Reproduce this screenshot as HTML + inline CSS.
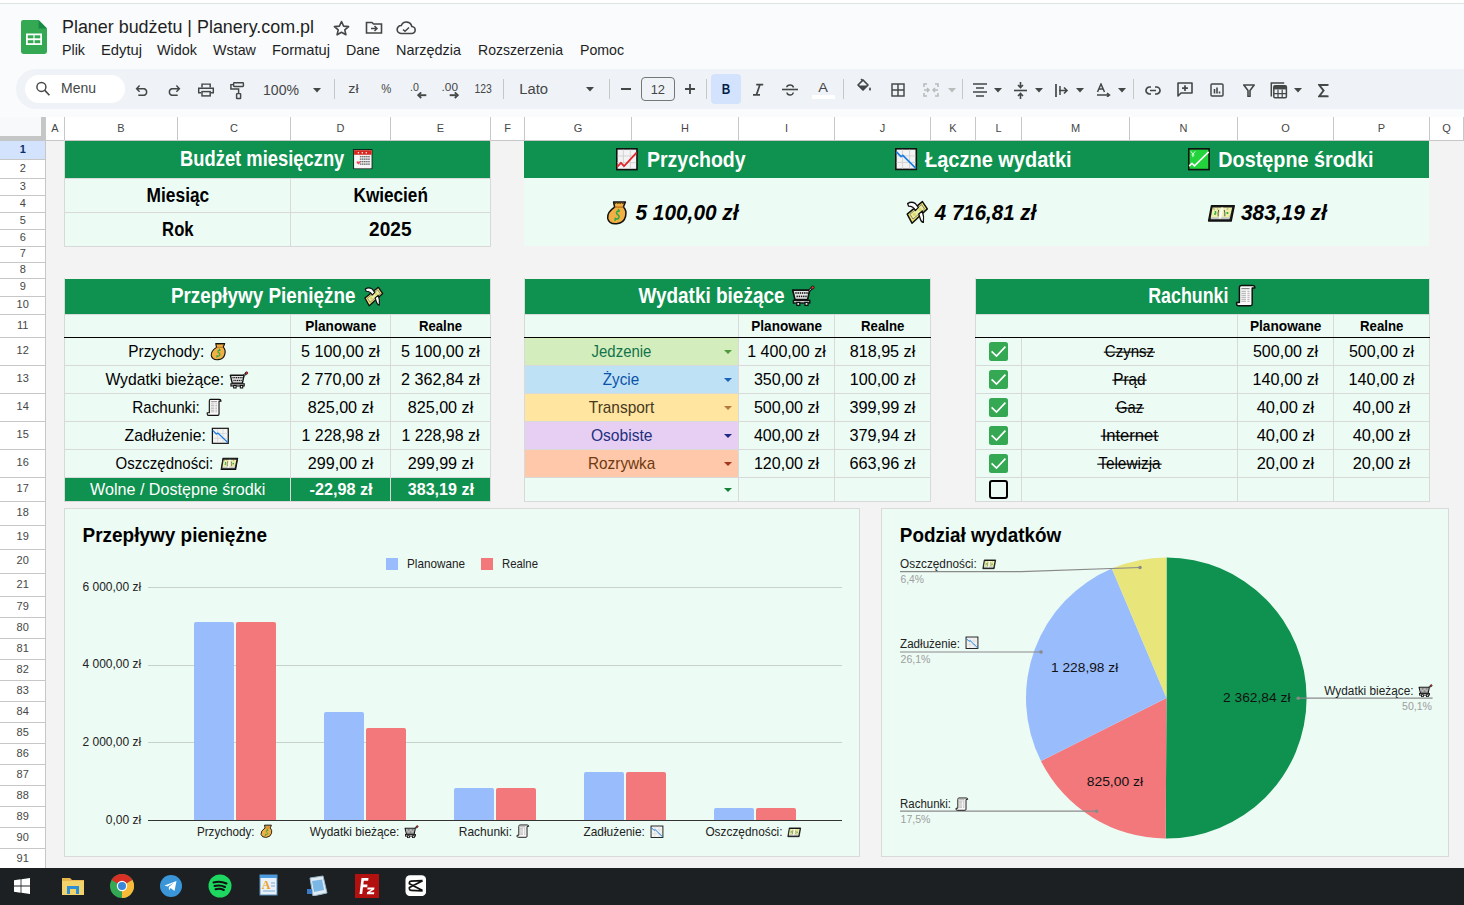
<!DOCTYPE html><html><head><meta charset="utf-8"><style>
html,body{margin:0;padding:0;width:1464px;height:905px;overflow:hidden;background:#f9fbfd;font-family:"Liberation Sans",sans-serif;}
</style></head><body>
<div style="position:absolute;left:0px;top:0px;width:1464px;height:3px;background:#ffffff;"></div>
<div style="position:absolute;left:0px;top:3px;width:1464px;height:1px;background:#dfe4e0;"></div>
<svg style="position:absolute;left:21px;top:20px" width="26" height="34" viewBox="0 0 26 34"><path d="M2.2 0H17.6L26 8.6V31.6Q26 34 23.6 34H2.4Q0 34 0 31.6V2.2Q0 0 2.2 0Z" fill="#34a853"/><path d="M17.6 0L26 8.6H17.6Z" fill="#178a43"/><rect x="5" y="13.5" width="16" height="11.5" fill="#fff"/><rect x="6.8" y="15.3" width="5.6" height="3" fill="#34a853"/><rect x="13.6" y="15.3" width="5.6" height="3" fill="#34a853"/><rect x="6.8" y="20.2" width="5.6" height="3" fill="#34a853"/><rect x="13.6" y="20.2" width="5.6" height="3" fill="#34a853"/></svg>

<svg style="position:absolute;left:333px;top:20px" width="17" height="16" viewBox="0 0 17 16"><path d="M8.5 1.5L10.6 6.1L15.6 6.6L11.8 9.9L12.9 14.8L8.5 12.3L4.1 14.8L5.2 9.9L1.4 6.6L6.4 6.1Z" fill="none" stroke="#444746" stroke-width="1.6" stroke-linejoin="round"/></svg>
<svg style="position:absolute;left:365px;top:20px" width="18" height="15" viewBox="0 0 18 15"><path d="M1.5 2.5H7L8.5 4H16.5V13H1.5Z" fill="none" stroke="#444746" stroke-width="1.6"/><path d="M6 8.5H12M9.5 6L12 8.5L9.5 11" fill="none" stroke="#444746" stroke-width="1.5"/></svg>
<svg style="position:absolute;left:396px;top:20px" width="20" height="15" viewBox="0 0 20 15"><path d="M5 13.5H15.5A3.5 3.5 0 0 0 15.8 6.5A5.5 5.5 0 0 0 5.3 5.5A4 4 0 0 0 5 13.5Z" fill="none" stroke="#444746" stroke-width="1.6"/><path d="M7 9.5L9 11.3L13 7.5" fill="none" stroke="#444746" stroke-width="1.5"/></svg>









<div style="position:absolute;left:16px;top:69px;width:1484px;height:40px;background:#eff2f7;border-radius:20px"></div>
<div style="position:absolute;left:25px;top:75px;width:100px;height:28px;background:#ffffff;border-radius:14px"></div>
<svg style="position:absolute;left:34px;top:81px" width="17" height="17" viewBox="0 0 17 17"><circle cx="7.4" cy="5.9" r="4.5" fill="none" stroke="#444746" stroke-width="1.45"/><path d="M10.6 9.1L15.4 14.2" stroke="#444746" stroke-width="1.6"/></svg>

<svg style="position:absolute;left:0;top:0" width="260" height="110">
<path d="M139.6 85.6L136.6 88.7L139.6 91.8M137 88.7H144.2A3.45 3.45 0 0 1 144.2 95.3H138.3" fill="none" stroke="#444746" stroke-width="1.45"/>
<path d="M176.4 85.6L179.4 88.7L176.4 91.8M179 88.7H171.8A3.45 3.45 0 0 0 171.8 95.3H177.7" fill="none" stroke="#444746" stroke-width="1.45"/>
<path d="M202 87.6V84.1H210.2V87.6" fill="none" stroke="#444746" stroke-width="1.45"/><path d="M201.2 92.8H198.7V88.2H213.3V92.8H210.8" fill="none" stroke="#444746" stroke-width="1.45"/><rect x="202" y="91.6" width="8.2" height="4.3" fill="none" stroke="#444746" stroke-width="1.45"/>
<rect x="233.6" y="82.8" width="9.8" height="3.6" rx="0.6" fill="none" stroke="#444746" stroke-width="1.45"/><path d="M233.6 84.6H230.9V88.9H238.6V93.4" fill="none" stroke="#444746" stroke-width="1.45"/><rect x="236.6" y="93.6" width="4" height="4.9" rx="0.5" fill="none" stroke="#444746" stroke-width="1.45"/>
</svg>

<svg style="position:absolute;left:313px;top:88px" width="8" height="5" viewBox="0 0 8 5"><path d="M0 0H8L4 4.5Z" fill="#444746"/></svg>
<div style="position:absolute;left:334px;top:79px;width:1px;height:20px;background:#c7c7c7;"></div>



<svg style="position:absolute;left:417px;top:92px" width="10" height="7" viewBox="0 0 10 7"><path d="M9.3 3.2H2.5" stroke="#444746" stroke-width="1.9"/><path d="M4.2 0.4L1.2 3.2L4.2 6" fill="none" stroke="#444746" stroke-width="1.8"/></svg>

<svg style="position:absolute;left:449px;top:92px" width="10" height="7" viewBox="0 0 10 7"><path d="M0.7 3.2H7.5" stroke="#444746" stroke-width="1.9"/><path d="M5.8 0.4L8.8 3.2L5.8 6" fill="none" stroke="#444746" stroke-width="1.8"/></svg>

<div style="position:absolute;left:503px;top:79px;width:1px;height:20px;background:#c7c7c7;"></div>

<svg style="position:absolute;left:586px;top:87px" width="8" height="5" viewBox="0 0 8 5"><path d="M0 0H8L4 4.5Z" fill="#444746"/></svg>
<div style="position:absolute;left:609px;top:79px;width:1px;height:20px;background:#c7c7c7;"></div>
<div style="position:absolute;left:621px;top:88px;width:10px;height:2px;background:#444746;"></div>
<div style="position:absolute;left:641px;top:77px;width:34px;height:24px;background:transparent;box-sizing:border-box;border:1px solid #747775;border-radius:4px"></div>

<svg style="position:absolute;left:685px;top:84px" width="10" height="10" viewBox="0 0 10 10"><path d="M5 0V10M0 5H10" stroke="#444746" stroke-width="1.8"/></svg>
<div style="position:absolute;left:706px;top:79px;width:1px;height:20px;background:#c7c7c7;"></div>
<div style="position:absolute;left:711px;top:74px;width:30px;height:30px;background:#d3e3fd;border-radius:4px"></div>

<svg style="position:absolute;left:750px;top:82px" width="16" height="16" viewBox="0 0 16 16"><path d="M6.2 2.7H13.2M3 12.9H10M9.9 2.7L6.4 12.9" stroke="#444746" stroke-width="1.7"/></svg>
<svg style="position:absolute;left:781px;top:84px" width="18" height="12" viewBox="0 0 18 12"><path d="M1 5.5H17" stroke="#444746" stroke-width="1.6"/><path d="M12.5 3.5Q12 1 9 1Q6 1 5.8 3.2" fill="none" stroke="#444746" stroke-width="1.45"/><path d="M6 8.5Q6.2 11 9 11Q12 11 12.3 8.5" fill="none" stroke="#444746" stroke-width="1.45"/></svg>

<div style="position:absolute;left:812px;top:95px;width:23px;height:4px;background:#ffffff;"></div>
<div style="position:absolute;left:843px;top:79px;width:1px;height:20px;background:#c7c7c7;"></div>
<svg style="position:absolute;left:856px;top:78px" width="16" height="14" viewBox="0 0 16 14"><path d="M2 7L7 2L12 7L7 12Z" fill="none" stroke="#444746" stroke-width="1.7" stroke-linejoin="round"/><path d="M2.5 7.5H11.5L7 12Z" fill="#444746"/><path d="M5 1L7 3" stroke="#444746" stroke-width="1.6"/><path d="M14 9Q15.5 11 14.8 12.2Q14 13 13.2 12.2Q12.5 11 14 9Z" fill="#444746"/></svg>
<svg style="position:absolute;left:891px;top:83px" width="14" height="14" viewBox="0 0 14 14"><rect x="1" y="1" width="12" height="12" fill="none" stroke="#444746" stroke-width="1.45"/><path d="M7 1V13M1 7H13" fill="none" stroke="#444746" stroke-width="1.45"/></svg>
<svg style="position:absolute;left:923px;top:83px" width="16" height="14" viewBox="0 0 16 14"><path d="M1 4V1H4M12 1H15V4M1 10V13H4M12 13H15V10" fill="none" stroke="#b9bcbb" stroke-width="1.6"/><path d="M1 7H6M4 5L6 7L4 9M15 7H10M12 5L10 7L12 9" fill="none" stroke="#b9bcbb" stroke-width="1.5"/></svg>
<svg style="position:absolute;left:948px;top:88px" width="8" height="5" viewBox="0 0 8 5"><path d="M0 0H8L4 4.5Z" fill="#b9bcbb"/></svg>
<div style="position:absolute;left:962px;top:79px;width:1px;height:20px;background:#c7c7c7;"></div>
<svg style="position:absolute;left:973px;top:83px" width="14" height="14" viewBox="0 0 14 14"><path d="M0 1H14M3 5H11M0 9H14M3 13H11" stroke="#444746" stroke-width="1.7"/></svg>
<svg style="position:absolute;left:994px;top:88px" width="8" height="5" viewBox="0 0 8 5"><path d="M0 0H8L4 4.5Z" fill="#444746"/></svg>
<svg style="position:absolute;left:1014px;top:82px" width="13" height="17" viewBox="0 0 13 17"><path d="M0 8.5H13" stroke="#444746" stroke-width="1.6"/><path d="M6.5 0V5M4 3L6.5 5.5L9 3M6.5 17V12M4 14L6.5 11.5L9 14" fill="none" stroke="#444746" stroke-width="1.6"/></svg>
<svg style="position:absolute;left:1035px;top:88px" width="8" height="5" viewBox="0 0 8 5"><path d="M0 0H8L4 4.5Z" fill="#444746"/></svg>
<svg style="position:absolute;left:1055px;top:84px" width="14" height="13" viewBox="0 0 14 13"><path d="M1 0V13" stroke="#444746" stroke-width="1.7"/><path d="M4 6.5H12M9 3.5L12 6.5L9 9.5" fill="none" stroke="#444746" stroke-width="1.6"/><path d="M5 2V11" stroke="#444746" stroke-width="1.5"/></svg>
<svg style="position:absolute;left:1076px;top:88px" width="8" height="5" viewBox="0 0 8 5"><path d="M0 0H8L4 4.5Z" fill="#444746"/></svg>
<svg style="position:absolute;left:1096px;top:83px" width="15" height="14" viewBox="0 0 15 14"><path d="M1.5 9L5 1L8.5 9M2.8 6H7.2" fill="none" stroke="#444746" stroke-width="1.5"/><path d="M1 12H13M11 10L13.5 12L11 14" fill="none" stroke="#444746" stroke-width="1.5"/></svg>
<svg style="position:absolute;left:1118px;top:88px" width="8" height="5" viewBox="0 0 8 5"><path d="M0 0H8L4 4.5Z" fill="#444746"/></svg>
<div style="position:absolute;left:1133px;top:79px;width:1px;height:20px;background:#c7c7c7;"></div>
<svg style="position:absolute;left:1145px;top:86px" width="16" height="9" viewBox="0 0 16 9"><path d="M6 1H4.5A3.5 3.5 0 0 0 4.5 8H6M10 1H11.5A3.5 3.5 0 0 1 11.5 8H10M5 4.5H11" fill="none" stroke="#444746" stroke-width="1.7"/></svg>
<svg style="position:absolute;left:1177px;top:82px" width="16" height="15" viewBox="0 0 16 15"><path d="M1 1H15V11H4L1 14Z" fill="none" stroke="#444746" stroke-width="1.6" stroke-linejoin="round"/><path d="M8 3.2V9M5.1 6.1H10.9" stroke="#444746" stroke-width="1.7"/></svg>
<svg style="position:absolute;left:1210px;top:83px" width="14" height="14" viewBox="0 0 14 14"><rect x="1" y="1" width="12" height="12" rx="1" fill="none" stroke="#444746" stroke-width="1.45"/><path d="M4.5 10.5V6M7 10.5V4.5M9.5 10.5V8.5" stroke="#444746" stroke-width="1.6"/></svg>
<svg style="position:absolute;left:1243px;top:84px" width="12" height="13" viewBox="0 0 12 13"><path d="M0.8 1H11.2L7 6.5V12.5H5V6.5Z" fill="none" stroke="#444746" stroke-width="1.6" stroke-linejoin="round"/></svg>
<svg style="position:absolute;left:1270px;top:82px" width="18" height="17" viewBox="0 0 18 17"><path d="M1.3 14.4V1.1H14.2" fill="none" stroke="#444746" stroke-width="1.5"/><rect x="3.8" y="3.8" width="12.6" height="12" rx="1.2" fill="none" stroke="#444746" stroke-width="1.5"/><rect x="3.8" y="3.8" width="12.6" height="3.6" fill="#444746"/><path d="M4 11.6H16.2M8 7.4V15.8M12.2 7.4V15.8" stroke="#444746" stroke-width="1.2"/></svg>
<svg style="position:absolute;left:1294px;top:88px" width="8" height="5" viewBox="0 0 8 5"><path d="M0 0H8L4 4.5Z" fill="#444746"/></svg>
<svg style="position:absolute;left:1318px;top:84px" width="11" height="14" viewBox="0 0 11 14"><path d="M9.6 1.8V1H1.2L5.6 6.6L1.2 12.2H9.6V11.4" fill="none" stroke="#444746" stroke-width="1.9" stroke-linejoin="miter"/></svg>
<div style="position:absolute;left:0px;top:117px;width:1464px;height:751px;background:#f3f3f3;"></div>
<div style="position:absolute;left:0px;top:117px;width:1464px;height:23px;background:#ffffff;"></div>
<div style="position:absolute;left:0px;top:140px;width:1464px;height:1px;background:#c7c7c7;"></div>
<div style="position:absolute;left:0px;top:117px;width:41px;height:19px;background:#f8f9fa;"></div>
<div style="position:absolute;left:41px;top:117px;width:4px;height:24px;background:#c4c7c5;"></div>
<div style="position:absolute;left:0px;top:136px;width:45px;height:5px;background:#c4c7c5;"></div>
<div style="position:absolute;left:0px;top:141px;width:45px;height:727px;background:#ffffff;"></div>
<div style="position:absolute;left:45px;top:117px;width:1px;height:751px;background:#c7c7c7;"></div>
<div style="position:absolute;left:64px;top:117px;width:1px;height:23px;background:#c7c7c7;"></div>

<div style="position:absolute;left:177px;top:117px;width:1px;height:23px;background:#c7c7c7;"></div>

<div style="position:absolute;left:290px;top:117px;width:1px;height:23px;background:#c7c7c7;"></div>

<div style="position:absolute;left:390px;top:117px;width:1px;height:23px;background:#c7c7c7;"></div>

<div style="position:absolute;left:490px;top:117px;width:1px;height:23px;background:#c7c7c7;"></div>

<div style="position:absolute;left:524px;top:117px;width:1px;height:23px;background:#c7c7c7;"></div>

<div style="position:absolute;left:631px;top:117px;width:1px;height:23px;background:#c7c7c7;"></div>

<div style="position:absolute;left:738px;top:117px;width:1px;height:23px;background:#c7c7c7;"></div>

<div style="position:absolute;left:834px;top:117px;width:1px;height:23px;background:#c7c7c7;"></div>

<div style="position:absolute;left:930px;top:117px;width:1px;height:23px;background:#c7c7c7;"></div>

<div style="position:absolute;left:975px;top:117px;width:1px;height:23px;background:#c7c7c7;"></div>

<div style="position:absolute;left:1021px;top:117px;width:1px;height:23px;background:#c7c7c7;"></div>

<div style="position:absolute;left:1129px;top:117px;width:1px;height:23px;background:#c7c7c7;"></div>

<div style="position:absolute;left:1237px;top:117px;width:1px;height:23px;background:#c7c7c7;"></div>

<div style="position:absolute;left:1333px;top:117px;width:1px;height:23px;background:#c7c7c7;"></div>

<div style="position:absolute;left:1429px;top:117px;width:1px;height:23px;background:#c7c7c7;"></div>

<div style="position:absolute;left:1463px;top:117px;width:1px;height:23px;background:#c7c7c7;"></div>

<div style="position:absolute;left:0px;top:141px;width:45px;height:18px;background:#d3e3fd;"></div>
<div style="position:absolute;left:0px;top:159px;width:45px;height:1px;background:#c7c7c7;"></div>

<div style="position:absolute;left:0px;top:178px;width:45px;height:1px;background:#c7c7c7;"></div>

<div style="position:absolute;left:0px;top:195px;width:45px;height:1px;background:#c7c7c7;"></div>

<div style="position:absolute;left:0px;top:212px;width:45px;height:1px;background:#c7c7c7;"></div>

<div style="position:absolute;left:0px;top:229px;width:45px;height:1px;background:#c7c7c7;"></div>

<div style="position:absolute;left:0px;top:246px;width:45px;height:1px;background:#c7c7c7;"></div>

<div style="position:absolute;left:0px;top:262px;width:45px;height:1px;background:#c7c7c7;"></div>

<div style="position:absolute;left:0px;top:278px;width:45px;height:1px;background:#c7c7c7;"></div>

<div style="position:absolute;left:0px;top:296px;width:45px;height:1px;background:#c7c7c7;"></div>

<div style="position:absolute;left:0px;top:314px;width:45px;height:1px;background:#c7c7c7;"></div>

<div style="position:absolute;left:0px;top:337px;width:45px;height:1px;background:#c7c7c7;"></div>

<div style="position:absolute;left:0px;top:365px;width:45px;height:1px;background:#c7c7c7;"></div>

<div style="position:absolute;left:0px;top:393px;width:45px;height:1px;background:#c7c7c7;"></div>

<div style="position:absolute;left:0px;top:421px;width:45px;height:1px;background:#c7c7c7;"></div>

<div style="position:absolute;left:0px;top:449px;width:45px;height:1px;background:#c7c7c7;"></div>

<div style="position:absolute;left:0px;top:477px;width:45px;height:1px;background:#c7c7c7;"></div>

<div style="position:absolute;left:0px;top:501px;width:45px;height:1px;background:#c7c7c7;"></div>

<div style="position:absolute;left:0px;top:525px;width:45px;height:1px;background:#c7c7c7;"></div>

<div style="position:absolute;left:0px;top:549px;width:45px;height:1px;background:#c7c7c7;"></div>

<div style="position:absolute;left:0px;top:573px;width:45px;height:1px;background:#c7c7c7;"></div>

<div style="position:absolute;left:0px;top:596px;width:45px;height:1px;background:#c7c7c7;"></div>

<div style="position:absolute;left:0px;top:617px;width:45px;height:1px;background:#c7c7c7;"></div>

<div style="position:absolute;left:0px;top:638px;width:45px;height:1px;background:#c7c7c7;"></div>

<div style="position:absolute;left:0px;top:659px;width:45px;height:1px;background:#c7c7c7;"></div>

<div style="position:absolute;left:0px;top:680px;width:45px;height:1px;background:#c7c7c7;"></div>

<div style="position:absolute;left:0px;top:701px;width:45px;height:1px;background:#c7c7c7;"></div>

<div style="position:absolute;left:0px;top:722px;width:45px;height:1px;background:#c7c7c7;"></div>

<div style="position:absolute;left:0px;top:743px;width:45px;height:1px;background:#c7c7c7;"></div>

<div style="position:absolute;left:0px;top:764px;width:45px;height:1px;background:#c7c7c7;"></div>

<div style="position:absolute;left:0px;top:785px;width:45px;height:1px;background:#c7c7c7;"></div>

<div style="position:absolute;left:0px;top:806px;width:45px;height:1px;background:#c7c7c7;"></div>

<div style="position:absolute;left:0px;top:827px;width:45px;height:1px;background:#c7c7c7;"></div>

<div style="position:absolute;left:0px;top:848px;width:45px;height:1px;background:#c7c7c7;"></div>


<div style="position:absolute;left:65px;top:141px;width:425px;height:37px;background:#0f914f;"></div>
<div style="position:absolute;left:65px;top:178px;width:425px;height:68px;background:#ecfbf4;"></div>
<div style="position:absolute;left:64px;top:140px;width:1px;height:107px;background:#d9d9d9;"></div>
<div style="position:absolute;left:490px;top:140px;width:1px;height:107px;background:#d9d9d9;"></div>
<div style="position:absolute;left:64px;top:246px;width:427px;height:1px;background:#d9d9d9;"></div>
<div style="position:absolute;left:290px;top:178px;width:1px;height:68px;background:#d9d9d9;"></div>
<div style="position:absolute;left:65px;top:212px;width:425px;height:1px;background:#d9d9d9;"></div>
<div style="position:absolute;left:65px;top:178px;width:425px;height:1px;background:#d9d9d9;"></div>

<svg style="position:absolute;left:351.51px;top:147.80px;overflow:visible" width="21.69" height="22.40" viewBox="-0.5 -0.5 22.0 22.5" preserveAspectRatio="none"><rect x="0.8" y="0.8" width="19.4" height="19.9" fill="#111"/><rect x="1.6" y="1.8" width="17.8" height="18.2" fill="#f7f7f7"/><rect x="1.6" y="1.8" width="17.8" height="4.5" fill="#d9261c"/><circle cx="6" cy="4.2" r="0.8" fill="#fff"/><circle cx="10" cy="4.2" r="0.8" fill="#fff"/><circle cx="14" cy="4.2" r="0.8" fill="#fff"/><rect x="7.5" y="7.5" width="1.6" height="1.4" fill="#6d6d6d"/><rect x="9.6" y="7.5" width="1.6" height="1.4" fill="#6d6d6d"/><rect x="11.7" y="7.5" width="1.6" height="1.4" fill="#6d6d6d"/><rect x="13.8" y="7.5" width="1.6" height="1.4" fill="#6d6d6d"/><rect x="15.9" y="7.5" width="1.6" height="1.4" fill="#6d6d6d"/><rect x="7.5" y="10" width="1.6" height="1.4" fill="#6d6d6d"/><rect x="9.6" y="10" width="1.6" height="1.4" fill="#6d6d6d"/><rect x="11.7" y="10" width="1.6" height="1.4" fill="#6d6d6d"/><rect x="13.8" y="10" width="1.6" height="1.4" fill="#6d6d6d"/><rect x="15.9" y="10" width="1.6" height="1.4" fill="#6d6d6d"/><rect x="7.5" y="12.5" width="1.6" height="1.4" fill="#6d6d6d"/><rect x="9.6" y="12.5" width="1.6" height="1.4" fill="#6d6d6d"/><rect x="11.7" y="12.5" width="1.6" height="1.4" fill="#6d6d6d"/><rect x="13.8" y="12.5" width="1.6" height="1.4" fill="#6d6d6d"/><rect x="15.9" y="12.5" width="1.6" height="1.4" fill="#6d6d6d"/><rect x="7.5" y="15" width="1.6" height="1.4" fill="#6d6d6d"/><rect x="9.6" y="15" width="1.6" height="1.4" fill="#6d6d6d"/><rect x="11.7" y="15" width="1.6" height="1.4" fill="#6d6d6d"/><rect x="13.8" y="15" width="1.6" height="1.4" fill="#6d6d6d"/><rect x="15.9" y="15" width="1.6" height="1.4" fill="#6d6d6d"/><path d="M4 13.5Q5 12.2 6 13.2Q7.2 12.2 8 13.6Q7.5 15.2 6 16.2Q4.5 15.2 4 13.5Z" fill="#f04a5a"/><path d="M0.8 0.5V1.4M3 0.5V1.4M5.2 0.5V1.4M7.4 0.5V1.4M9.6 0.5V1.4M11.8 0.5V1.4M14 0.5V1.4M16.2 0.5V1.4M18.4 0.5V1.4" stroke="#111" stroke-width="0.9"/></svg>




<div style="position:absolute;left:524px;top:141px;width:905px;height:37px;background:#0f914f;"></div>
<div style="position:absolute;left:524px;top:178px;width:905px;height:68px;background:#ecfbf4;"></div>
<svg style="position:absolute;left:615.11px;top:147.08px;overflow:visible" width="23.78" height="24.44" viewBox="-1.0 -1.0 24.0 24.0" preserveAspectRatio="none"><rect x="0.8" y="0.8" width="20.4" height="20.4" fill="#f3f3f3" stroke="#111" stroke-width="1.6"/><path d="M7.5 1.6V20.4M14.5 1.6V20.4M1.6 7.8H20.4M1.6 14.3H20.4" stroke="#cfd3d0" stroke-width="0.9"/><path d="M1.2 18.5L5 14.5L8.2 17.8L20.8 4.5" fill="none" stroke="#e3262b" stroke-width="1.8" stroke-linejoin="round"/></svg>

<svg style="position:absolute;left:894.00px;top:147.29px;overflow:visible" width="24.11" height="24.22" viewBox="-1.0 -1.0 24.0 24.0" preserveAspectRatio="none"><rect x="0.8" y="0.8" width="20.4" height="20.4" fill="#f3f3f3" stroke="#111" stroke-width="1.6"/><path d="M7.5 1.6V20.4M14.5 1.6V20.4M1.6 7.8H20.4M1.6 14.3H20.4" stroke="#cfd3d0" stroke-width="0.9"/><path d="M1.2 3.5L6 8.5L7.8 7.2L20.8 20.2" fill="none" stroke="#1d7fe0" stroke-width="1.7" stroke-linejoin="round"/></svg>

<svg style="position:absolute;left:1187.00px;top:147.08px;overflow:visible" width="23.89" height="24.44" viewBox="-1.0 -1.0 24.0 24.0" preserveAspectRatio="none"><rect x="0.8" y="0.8" width="20.4" height="20.4" fill="#22d33b" stroke="#111" stroke-width="1.6"/><path d="M1.2 17.8L4 15L6.5 17.5L20.8 3.8" fill="none" stroke="#fff" stroke-width="1.6" stroke-linejoin="round"/><path d="M2.8 3.2L5 6L7.2 3.2M5 6V9M3.6 6.8H6.4" fill="none" stroke="#e8fff0" stroke-width="0.9"/></svg>

<svg style="position:absolute;left:606.40px;top:199.60px;overflow:visible" width="21.10" height="25.20" viewBox="-0.8 -0.8 21.1 25.200000000000003" preserveAspectRatio="none"><path d="M6.8 1.2H18.6L16.6 6.2Q20.2 9.5 18.8 15.5Q17.2 22.4 9.8 23Q2.2 23.6 0.9 17.6Q0 11.6 7.8 6.4Z" fill="#f1b043" stroke="#111" stroke-width="1.5" stroke-linejoin="round"/><path d="M7.8 6.3H16.6" stroke="#b5690f" stroke-width="1.1"/><path d="M7.2 1.8L8.3 3.2L9.6 1.8L10.9 3.2L12.2 1.8L13.5 3.2L14.8 1.8L16.1 3.2L17.6 1.8" fill="none" stroke="#3a2a10" stroke-width="0.8"/><path d="M12.6 10.2Q10.2 9.8 9.6 11.8Q9.6 13.5 11.4 14.4Q13.2 15.6 11.6 17.6Q10 19 8.4 17.6M11.6 8.8L12.2 10.6M8.6 17.8L8.2 19.6" fill="none" stroke="#2aa84a" stroke-width="1.5" stroke-linecap="round"/></svg>

<svg style="position:absolute;left:904.60px;top:200.40px;overflow:visible" width="23.10" height="24.00" viewBox="-0.8 -0.8 23.1 24.0" preserveAspectRatio="none"><path d="M1.4 13.3L16.6 0.8L21.5 8.1L6.2 22.4Z" fill="#f2e56e" stroke="#111" stroke-width="1.5" stroke-linejoin="round"/><path d="M4.2 13.5L15.8 3.8L18.8 8.3L7.2 18.2Z" fill="#e9eea0" stroke="#777" stroke-width="0.9"/><circle cx="8.5" cy="13.6" r="1.6" fill="#ddd866"/><circle cx="14.2" cy="8.6" r="1.6" fill="#ddd866"/><path d="M1.8 2.8Q5.5 0.2 9.4 2.6L12.6 6.6L9.6 9.8Q7.6 5.4 2.8 5.4Z" fill="#fff" stroke="#111" stroke-width="1.3" stroke-linejoin="round"/><path d="M13 13.2L16.4 10.2Q18.5 15.5 17.6 21.6Q15.2 21.2 14.2 17.2Z" fill="#fff" stroke="#111" stroke-width="1.3" stroke-linejoin="round"/></svg>

<svg style="position:absolute;left:1206.70px;top:203.50px;overflow:visible" width="28.90" height="18.60" viewBox="-0.8 -0.8 28.900000000000002 18.6" preserveAspectRatio="none"><path d="M3.7 0.8H26.5L23.4 16.2H0.8Z" fill="#1a1a1a" stroke="#111" stroke-width="1.4" stroke-linejoin="round"/><path d="M4.8 2.8H24.4L22 13.2H2.9Z" fill="#eef0a8"/><path d="M3.3 12.4H22.2L21.8 14.4H2.8Z" fill="#bfc6c8"/><path d="M13.4 2.8H15.6L13.2 13.8H11Z" fill="#fafafa"/><path d="M5.5 4L7 4.5M9.5 4L10.5 4.8M19 4.5L20.5 4M21.5 11L22.5 12" stroke="#777" stroke-width="0.8"/><circle cx="7.6" cy="7" r="0.9" fill="#1fa43c"/><circle cx="7.2" cy="9.2" r="0.9" fill="#1fa43c"/><circle cx="8" cy="8.1" r="0.7" fill="#1fa43c"/><circle cx="19.6" cy="8.2" r="1.1" fill="#1fa43c"/><path d="M10.8 5.2Q10 8 10.4 11.6M16.5 5.2Q17.5 8.2 17 11.5" stroke="#555" stroke-width="1" fill="none"/></svg>

<div style="position:absolute;left:65px;top:279px;width:425px;height:35px;background:#0f914f;"></div>
<div style="position:absolute;left:65px;top:314px;width:425px;height:164px;background:#ecfbf4;"></div>
<div style="position:absolute;left:65px;top:478px;width:425px;height:23px;background:#0f914f;"></div>
<div style="position:absolute;left:64px;top:278px;width:1px;height:224px;background:#d9d9d9;"></div>
<div style="position:absolute;left:490px;top:278px;width:1px;height:224px;background:#d9d9d9;"></div>
<div style="position:absolute;left:64px;top:501px;width:427px;height:1px;background:#d9d9d9;"></div>
<div style="position:absolute;left:290px;top:314px;width:1px;height:187px;background:#d9d9d9;"></div>
<div style="position:absolute;left:390px;top:314px;width:1px;height:187px;background:#d9d9d9;"></div>
<div style="position:absolute;left:65px;top:314px;width:425px;height:1px;background:#d9d9d9;"></div>
<div style="position:absolute;left:65px;top:365px;width:425px;height:1px;background:#d9d9d9;"></div>
<div style="position:absolute;left:65px;top:393px;width:425px;height:1px;background:#d9d9d9;"></div>
<div style="position:absolute;left:65px;top:421px;width:425px;height:1px;background:#d9d9d9;"></div>
<div style="position:absolute;left:65px;top:449px;width:425px;height:1px;background:#d9d9d9;"></div>
<div style="position:absolute;left:65px;top:477px;width:425px;height:1px;background:#d9d9d9;"></div>
<div style="position:absolute;left:64px;top:337px;width:427px;height:1px;background:#000000;"></div>

<svg style="position:absolute;left:362.89px;top:285.92px;overflow:visible" width="20.41" height="20.46" viewBox="-0.8 -0.8 23.1 24.0" preserveAspectRatio="none"><path d="M1.4 13.3L16.6 0.8L21.5 8.1L6.2 22.4Z" fill="#f2e56e" stroke="#111" stroke-width="1.5" stroke-linejoin="round"/><path d="M4.2 13.5L15.8 3.8L18.8 8.3L7.2 18.2Z" fill="#e9eea0" stroke="#777" stroke-width="0.9"/><circle cx="8.5" cy="13.6" r="1.6" fill="#ddd866"/><circle cx="14.2" cy="8.6" r="1.6" fill="#ddd866"/><path d="M1.8 2.8Q5.5 0.2 9.4 2.6L12.6 6.6L9.6 9.8Q7.6 5.4 2.8 5.4Z" fill="#fff" stroke="#111" stroke-width="1.3" stroke-linejoin="round"/><path d="M13 13.2L16.4 10.2Q18.5 15.5 17.6 21.6Q15.2 21.2 14.2 17.2Z" fill="#fff" stroke="#111" stroke-width="1.3" stroke-linejoin="round"/></svg>



<svg style="position:absolute;left:210.29px;top:341.91px;overflow:visible" width="16.01" height="18.69" viewBox="-0.8 -0.8 21.1 25.200000000000003" preserveAspectRatio="none"><path d="M6.8 1.2H18.6L16.6 6.2Q20.2 9.5 18.8 15.5Q17.2 22.4 9.8 23Q2.2 23.6 0.9 17.6Q0 11.6 7.8 6.4Z" fill="#f1b043" stroke="#111" stroke-width="1.5" stroke-linejoin="round"/><path d="M7.8 6.3H16.6" stroke="#b5690f" stroke-width="1.1"/><path d="M7.2 1.8L8.3 3.2L9.6 1.8L10.9 3.2L12.2 1.8L13.5 3.2L14.8 1.8L16.1 3.2L17.6 1.8" fill="none" stroke="#3a2a10" stroke-width="0.8"/><path d="M12.6 10.2Q10.2 9.8 9.6 11.8Q9.6 13.5 11.4 14.4Q13.2 15.6 11.6 17.6Q10 19 8.4 17.6M11.6 8.8L12.2 10.6M8.6 17.8L8.2 19.6" fill="none" stroke="#2aa84a" stroke-width="1.5" stroke-linecap="round"/></svg>



<svg style="position:absolute;left:229.35px;top:370.53px;overflow:visible" width="19.49" height="18.13" viewBox="-0.8 -0.8 24.1 21.8" preserveAspectRatio="none"><path d="M0.9 4.4H17.8L15.8 13.8H3.2Z" fill="#e6e6e6" stroke="#111" stroke-width="1.7" stroke-linejoin="round"/><rect x="3.5" y="6.4" width="1.4" height="1.6" fill="#111"/><rect x="5.7" y="6.4" width="1.4" height="1.6" fill="#111"/><rect x="7.8999999999999995" y="6.4" width="1.4" height="1.6" fill="#111"/><rect x="10.100000000000001" y="6.4" width="1.4" height="1.6" fill="#111"/><rect x="12.3" y="6.4" width="1.4" height="1.6" fill="#111"/><rect x="14.5" y="6.4" width="1.4" height="1.6" fill="#111"/><rect x="4.7" y="9.8" width="1.4" height="1.6" fill="#111"/><rect x="6.8999999999999995" y="9.8" width="1.4" height="1.6" fill="#111"/><rect x="9.100000000000001" y="9.8" width="1.4" height="1.6" fill="#111"/><rect x="11.3" y="9.8" width="1.4" height="1.6" fill="#111"/><rect x="13.5" y="9.8" width="1.4" height="1.6" fill="#111"/><path d="M17.4 4.8L20.4 1.9" stroke="#111" stroke-width="2.6"/><path d="M17.6 4.6L20.2 2.1" stroke="#ddd" stroke-width="0.9"/><circle cx="20.9" cy="1.7" r="1.5" fill="#e8322b" stroke="#111" stroke-width="0.8"/><rect x="1.6" y="14.6" width="16.4" height="2.6" fill="#e6e6e6" stroke="#111" stroke-width="1.4"/><rect x="5.0" y="16.6" width="3" height="3" fill="#f2f2f2" stroke="#111" stroke-width="1.3"/><rect x="13.2" y="16.6" width="3" height="3" fill="#f2f2f2" stroke="#111" stroke-width="1.3"/></svg>



<svg style="position:absolute;left:205.79px;top:397.96px;overflow:visible" width="16.21" height="18.68" viewBox="-0.8 -0.8 21.400000000000002 23.3" preserveAspectRatio="none"><path d="M4 1.8Q4 0.8 5.2 0.8H16.8Q19 0.8 19 2.8V3.2H16.4V19.2Q16.4 20.9 14.8 20.9H2.6Q0.8 20.9 0.8 19.2V17.6H3.6V3Q3.6 1.8 4 1.8Z" fill="#fafafa" stroke="#111" stroke-width="1.5" stroke-linejoin="round"/><path d="M5.6 3.8H13.8" stroke="#888" stroke-width="1.2"/><path d="M5.6 6.5H10.2M11.6 6.5H13.8M5.6 8.5H10.2M11.6 8.5H13.8M5.6 10.5H10.2M11.6 10.5H13.8M5.6 12.5H10.2M11.6 12.5H13.8M5.6 14.5H10.2M11.6 14.5H13.8M5.6 16.5H10.2M11.6 16.5H13.8" stroke="#9a9a9a" stroke-width="0.8"/></svg>



<svg style="position:absolute;left:211.02px;top:426.76px;overflow:visible" width="18.65" height="17.67" viewBox="-1.0 -1.0 24.0 24.0" preserveAspectRatio="none"><rect x="0.8" y="0.8" width="20.4" height="20.4" fill="#f3f3f3" stroke="#111" stroke-width="1.6"/><path d="M7.5 1.6V20.4M14.5 1.6V20.4M1.6 7.8H20.4M1.6 14.3H20.4" stroke="#cfd3d0" stroke-width="0.9"/><path d="M1.2 3.5L6 8.5L7.8 7.2L20.8 20.2" fill="none" stroke="#1d7fe0" stroke-width="1.7" stroke-linejoin="round"/></svg>



<svg style="position:absolute;left:219.68px;top:456.91px;overflow:visible" width="18.84" height="13.79" viewBox="-0.8 -0.8 28.900000000000002 18.6" preserveAspectRatio="none"><path d="M3.7 0.8H26.5L23.4 16.2H0.8Z" fill="#1a1a1a" stroke="#111" stroke-width="1.4" stroke-linejoin="round"/><path d="M4.8 2.8H24.4L22 13.2H2.9Z" fill="#eef0a8"/><path d="M3.3 12.4H22.2L21.8 14.4H2.8Z" fill="#bfc6c8"/><path d="M13.4 2.8H15.6L13.2 13.8H11Z" fill="#fafafa"/><path d="M5.5 4L7 4.5M9.5 4L10.5 4.8M19 4.5L20.5 4M21.5 11L22.5 12" stroke="#777" stroke-width="0.8"/><circle cx="7.6" cy="7" r="0.9" fill="#1fa43c"/><circle cx="7.2" cy="9.2" r="0.9" fill="#1fa43c"/><circle cx="8" cy="8.1" r="0.7" fill="#1fa43c"/><circle cx="19.6" cy="8.2" r="1.1" fill="#1fa43c"/><path d="M10.8 5.2Q10 8 10.4 11.6M16.5 5.2Q17.5 8.2 17 11.5" stroke="#555" stroke-width="1" fill="none"/></svg>





<div style="position:absolute;left:525px;top:279px;width:405px;height:35px;background:#0f914f;"></div>
<div style="position:absolute;left:525px;top:314px;width:405px;height:187px;background:#ecfbf4;"></div>
<div style="position:absolute;left:525px;top:338px;width:213px;height:27px;background:#d4edbc;"></div>

<svg style="position:absolute;left:724px;top:350px" width="8" height="4" viewBox="0 0 8 4"><path d="M0 0H8L4 4Z" fill="#4f9a3c"/></svg>
<div style="position:absolute;left:525px;top:366px;width:213px;height:27px;background:#bfe1f6;"></div>

<svg style="position:absolute;left:724px;top:378px" width="8" height="4" viewBox="0 0 8 4"><path d="M0 0H8L4 4Z" fill="#1a63b8"/></svg>
<div style="position:absolute;left:525px;top:394px;width:213px;height:27px;background:#ffe5a0;"></div>

<svg style="position:absolute;left:724px;top:406px" width="8" height="4" viewBox="0 0 8 4"><path d="M0 0H8L4 4Z" fill="#b47a3c"/></svg>
<div style="position:absolute;left:525px;top:422px;width:213px;height:27px;background:#e6cff2;"></div>

<svg style="position:absolute;left:724px;top:434px" width="8" height="4" viewBox="0 0 8 4"><path d="M0 0H8L4 4Z" fill="#1f2a80"/></svg>
<div style="position:absolute;left:525px;top:450px;width:213px;height:27px;background:#ffc8aa;"></div>

<svg style="position:absolute;left:724px;top:462px" width="8" height="4" viewBox="0 0 8 4"><path d="M0 0H8L4 4Z" fill="#a3351a"/></svg>
<svg style="position:absolute;left:724px;top:488px" width="8" height="4" viewBox="0 0 8 4"><path d="M0 0H8L4 4Z" fill="#188038"/></svg>
<div style="position:absolute;left:524px;top:278px;width:1px;height:224px;background:#d9d9d9;"></div>
<div style="position:absolute;left:930px;top:278px;width:1px;height:224px;background:#d9d9d9;"></div>
<div style="position:absolute;left:524px;top:501px;width:407px;height:1px;background:#d9d9d9;"></div>
<div style="position:absolute;left:738px;top:314px;width:1px;height:187px;background:#d9d9d9;"></div>
<div style="position:absolute;left:834px;top:314px;width:1px;height:187px;background:#d9d9d9;"></div>
<div style="position:absolute;left:525px;top:314px;width:405px;height:1px;background:#d9d9d9;"></div>
<div style="position:absolute;left:525px;top:365px;width:405px;height:1px;background:#d9d9d9;"></div>
<div style="position:absolute;left:525px;top:393px;width:405px;height:1px;background:#d9d9d9;"></div>
<div style="position:absolute;left:525px;top:421px;width:405px;height:1px;background:#d9d9d9;"></div>
<div style="position:absolute;left:525px;top:449px;width:405px;height:1px;background:#d9d9d9;"></div>
<div style="position:absolute;left:525px;top:477px;width:405px;height:1px;background:#d9d9d9;"></div>
<div style="position:absolute;left:524px;top:337px;width:407px;height:1px;background:#000000;"></div>

<svg style="position:absolute;left:791.00px;top:285.00px;overflow:visible" width="24.10" height="21.80" viewBox="-0.8 -0.8 24.1 21.8" preserveAspectRatio="none"><path d="M0.9 4.4H17.8L15.8 13.8H3.2Z" fill="#e6e6e6" stroke="#111" stroke-width="1.7" stroke-linejoin="round"/><rect x="3.5" y="6.4" width="1.4" height="1.6" fill="#111"/><rect x="5.7" y="6.4" width="1.4" height="1.6" fill="#111"/><rect x="7.8999999999999995" y="6.4" width="1.4" height="1.6" fill="#111"/><rect x="10.100000000000001" y="6.4" width="1.4" height="1.6" fill="#111"/><rect x="12.3" y="6.4" width="1.4" height="1.6" fill="#111"/><rect x="14.5" y="6.4" width="1.4" height="1.6" fill="#111"/><rect x="4.7" y="9.8" width="1.4" height="1.6" fill="#111"/><rect x="6.8999999999999995" y="9.8" width="1.4" height="1.6" fill="#111"/><rect x="9.100000000000001" y="9.8" width="1.4" height="1.6" fill="#111"/><rect x="11.3" y="9.8" width="1.4" height="1.6" fill="#111"/><rect x="13.5" y="9.8" width="1.4" height="1.6" fill="#111"/><path d="M17.4 4.8L20.4 1.9" stroke="#111" stroke-width="2.6"/><path d="M17.6 4.6L20.2 2.1" stroke="#ddd" stroke-width="0.9"/><circle cx="20.9" cy="1.7" r="1.5" fill="#e8322b" stroke="#111" stroke-width="0.8"/><rect x="1.6" y="14.6" width="16.4" height="2.6" fill="#e6e6e6" stroke="#111" stroke-width="1.4"/><rect x="5.0" y="16.6" width="3" height="3" fill="#f2f2f2" stroke="#111" stroke-width="1.3"/><rect x="13.2" y="16.6" width="3" height="3" fill="#f2f2f2" stroke="#111" stroke-width="1.3"/></svg>












<div style="position:absolute;left:976px;top:279px;width:453px;height:35px;background:#0f914f;"></div>
<div style="position:absolute;left:976px;top:314px;width:453px;height:187px;background:#ecfbf4;"></div>
<div style="position:absolute;left:975px;top:278px;width:1px;height:224px;background:#d9d9d9;"></div>
<div style="position:absolute;left:1429px;top:278px;width:1px;height:224px;background:#d9d9d9;"></div>
<div style="position:absolute;left:975px;top:501px;width:455px;height:1px;background:#d9d9d9;"></div>
<div style="position:absolute;left:1237px;top:314px;width:1px;height:187px;background:#d9d9d9;"></div>
<div style="position:absolute;left:1333px;top:314px;width:1px;height:187px;background:#d9d9d9;"></div>
<div style="position:absolute;left:1021px;top:338px;width:1px;height:163px;background:#d9d9d9;"></div>
<div style="position:absolute;left:976px;top:314px;width:453px;height:1px;background:#d9d9d9;"></div>
<div style="position:absolute;left:976px;top:365px;width:453px;height:1px;background:#d9d9d9;"></div>
<div style="position:absolute;left:976px;top:393px;width:453px;height:1px;background:#d9d9d9;"></div>
<div style="position:absolute;left:976px;top:421px;width:453px;height:1px;background:#d9d9d9;"></div>
<div style="position:absolute;left:976px;top:449px;width:453px;height:1px;background:#d9d9d9;"></div>
<div style="position:absolute;left:976px;top:477px;width:453px;height:1px;background:#d9d9d9;"></div>
<div style="position:absolute;left:975px;top:337px;width:455px;height:1px;background:#000000;"></div>

<svg style="position:absolute;left:1235.30px;top:284.20px;overflow:visible" width="21.40" height="23.30" viewBox="-0.8 -0.8 21.400000000000002 23.3" preserveAspectRatio="none"><path d="M4 1.8Q4 0.8 5.2 0.8H16.8Q19 0.8 19 2.8V3.2H16.4V19.2Q16.4 20.9 14.8 20.9H2.6Q0.8 20.9 0.8 19.2V17.6H3.6V3Q3.6 1.8 4 1.8Z" fill="#fafafa" stroke="#111" stroke-width="1.5" stroke-linejoin="round"/><path d="M5.6 3.8H13.8" stroke="#888" stroke-width="1.2"/><path d="M5.6 6.5H10.2M11.6 6.5H13.8M5.6 8.5H10.2M11.6 8.5H13.8M5.6 10.5H10.2M11.6 10.5H13.8M5.6 12.5H10.2M11.6 12.5H13.8M5.6 14.5H10.2M11.6 14.5H13.8M5.6 16.5H10.2M11.6 16.5H13.8" stroke="#9a9a9a" stroke-width="0.8"/></svg>





<svg style="position:absolute;left:988px;top:341px" width="21" height="21" viewBox="0 0 21 21"><rect x="1" y="1" width="19" height="19" rx="2.5" fill="#34a853"/><path d="M3.6 10.4L8.5 15L17.4 5.6" fill="none" stroke="#fff" stroke-width="1.7"/></svg>



<svg style="position:absolute;left:988px;top:369px" width="21" height="21" viewBox="0 0 21 21"><rect x="1" y="1" width="19" height="19" rx="2.5" fill="#34a853"/><path d="M3.6 10.4L8.5 15L17.4 5.6" fill="none" stroke="#fff" stroke-width="1.7"/></svg>



<svg style="position:absolute;left:988px;top:397px" width="21" height="21" viewBox="0 0 21 21"><rect x="1" y="1" width="19" height="19" rx="2.5" fill="#34a853"/><path d="M3.6 10.4L8.5 15L17.4 5.6" fill="none" stroke="#fff" stroke-width="1.7"/></svg>



<svg style="position:absolute;left:988px;top:425px" width="21" height="21" viewBox="0 0 21 21"><rect x="1" y="1" width="19" height="19" rx="2.5" fill="#34a853"/><path d="M3.6 10.4L8.5 15L17.4 5.6" fill="none" stroke="#fff" stroke-width="1.7"/></svg>



<svg style="position:absolute;left:988px;top:453px" width="21" height="21" viewBox="0 0 21 21"><rect x="1" y="1" width="19" height="19" rx="2.5" fill="#34a853"/><path d="M3.6 10.4L8.5 15L17.4 5.6" fill="none" stroke="#fff" stroke-width="1.7"/></svg>
<svg style="position:absolute;left:989px;top:480px" width="19" height="19" viewBox="0 0 19 19"><rect x="1" y="1" width="17" height="17" rx="2" fill="none" stroke="#000" stroke-width="2"/></svg>
<div style="position:absolute;left:64px;top:508px;width:796px;height:349px;background:#ecfbf4;box-sizing:border-box;border:1px solid #d9d9d9"></div>

<div style="position:absolute;left:386px;top:558px;width:12px;height:12px;background:#98bcfc;"></div>

<div style="position:absolute;left:481px;top:558px;width:12px;height:12px;background:#f2787c;"></div>

<div style="position:absolute;left:148px;top:587px;width:694px;height:1px;background:#c8d2cc;"></div>
<div style="position:absolute;left:148px;top:665px;width:694px;height:1px;background:#c8d2cc;"></div>
<div style="position:absolute;left:148px;top:742px;width:694px;height:1px;background:#c8d2cc;"></div>




<div style="position:absolute;left:194px;top:622px;width:40px;height:198px;background:#98bcfc;border-radius:2px 2px 0 0"></div>
<div style="position:absolute;left:236px;top:622px;width:40px;height:198px;background:#f2787c;border-radius:2px 2px 0 0"></div>
<div style="position:absolute;left:324px;top:712px;width:40px;height:108px;background:#98bcfc;border-radius:2px 2px 0 0"></div>
<div style="position:absolute;left:366px;top:728px;width:40px;height:92px;background:#f2787c;border-radius:2px 2px 0 0"></div>
<div style="position:absolute;left:454px;top:788px;width:40px;height:32px;background:#98bcfc;border-radius:2px 2px 0 0"></div>
<div style="position:absolute;left:496px;top:788px;width:40px;height:32px;background:#f2787c;border-radius:2px 2px 0 0"></div>
<div style="position:absolute;left:584px;top:772px;width:40px;height:48px;background:#98bcfc;border-radius:2px 2px 0 0"></div>
<div style="position:absolute;left:626px;top:772px;width:40px;height:48px;background:#f2787c;border-radius:2px 2px 0 0"></div>
<div style="position:absolute;left:714px;top:808px;width:40px;height:12px;background:#98bcfc;border-radius:2px 2px 0 0"></div>
<div style="position:absolute;left:756px;top:808px;width:40px;height:12px;background:#f2787c;border-radius:2px 2px 0 0"></div>
<div style="position:absolute;left:148px;top:820px;width:694px;height:1px;background:#333333;"></div>

<svg style="position:absolute;left:259.83px;top:824.45px;overflow:visible" width="12.44" height="14.20" viewBox="-0.8 -0.8 21.1 25.200000000000003" preserveAspectRatio="none"><path d="M6.8 1.2H18.6L16.6 6.2Q20.2 9.5 18.8 15.5Q17.2 22.4 9.8 23Q2.2 23.6 0.9 17.6Q0 11.6 7.8 6.4Z" fill="#f1b043" stroke="#111" stroke-width="1.5" stroke-linejoin="round"/><path d="M7.8 6.3H16.6" stroke="#b5690f" stroke-width="1.1"/><path d="M7.2 1.8L8.3 3.2L9.6 1.8L10.9 3.2L12.2 1.8L13.5 3.2L14.8 1.8L16.1 3.2L17.6 1.8" fill="none" stroke="#3a2a10" stroke-width="0.8"/><path d="M12.6 10.2Q10.2 9.8 9.6 11.8Q9.6 13.5 11.4 14.4Q13.2 15.6 11.6 17.6Q10 19 8.4 17.6M11.6 8.8L12.2 10.6M8.6 17.8L8.2 19.6" fill="none" stroke="#2aa84a" stroke-width="1.5" stroke-linecap="round"/></svg>

<svg style="position:absolute;left:403.71px;top:824.70px;overflow:visible" width="14.78" height="13.49" viewBox="-0.8 -0.8 24.1 21.8" preserveAspectRatio="none"><path d="M0.9 4.4H17.8L15.8 13.8H3.2Z" fill="#e6e6e6" stroke="#111" stroke-width="1.7" stroke-linejoin="round"/><rect x="3.5" y="6.4" width="1.4" height="1.6" fill="#111"/><rect x="5.7" y="6.4" width="1.4" height="1.6" fill="#111"/><rect x="7.8999999999999995" y="6.4" width="1.4" height="1.6" fill="#111"/><rect x="10.100000000000001" y="6.4" width="1.4" height="1.6" fill="#111"/><rect x="12.3" y="6.4" width="1.4" height="1.6" fill="#111"/><rect x="14.5" y="6.4" width="1.4" height="1.6" fill="#111"/><rect x="4.7" y="9.8" width="1.4" height="1.6" fill="#111"/><rect x="6.8999999999999995" y="9.8" width="1.4" height="1.6" fill="#111"/><rect x="9.100000000000001" y="9.8" width="1.4" height="1.6" fill="#111"/><rect x="11.3" y="9.8" width="1.4" height="1.6" fill="#111"/><rect x="13.5" y="9.8" width="1.4" height="1.6" fill="#111"/><path d="M17.4 4.8L20.4 1.9" stroke="#111" stroke-width="2.6"/><path d="M17.6 4.6L20.2 2.1" stroke="#ddd" stroke-width="0.9"/><circle cx="20.9" cy="1.7" r="1.5" fill="#e8322b" stroke="#111" stroke-width="0.8"/><rect x="1.6" y="14.6" width="16.4" height="2.6" fill="#e6e6e6" stroke="#111" stroke-width="1.4"/><rect x="5.0" y="16.6" width="3" height="3" fill="#f2f2f2" stroke="#111" stroke-width="1.3"/><rect x="13.2" y="16.6" width="3" height="3" fill="#f2f2f2" stroke="#111" stroke-width="1.3"/></svg>

<svg style="position:absolute;left:516.39px;top:824.41px;overflow:visible" width="13.73" height="14.28" viewBox="-0.8 -0.8 21.400000000000002 23.3" preserveAspectRatio="none"><path d="M4 1.8Q4 0.8 5.2 0.8H16.8Q19 0.8 19 2.8V3.2H16.4V19.2Q16.4 20.9 14.8 20.9H2.6Q0.8 20.9 0.8 19.2V17.6H3.6V3Q3.6 1.8 4 1.8Z" fill="#fafafa" stroke="#111" stroke-width="1.5" stroke-linejoin="round"/><path d="M5.6 3.8H13.8" stroke="#888" stroke-width="1.2"/><path d="M5.6 6.5H10.2M11.6 6.5H13.8M5.6 8.5H10.2M11.6 8.5H13.8M5.6 10.5H10.2M11.6 10.5H13.8M5.6 12.5H10.2M11.6 12.5H13.8M5.6 14.5H10.2M11.6 14.5H13.8M5.6 16.5H10.2M11.6 16.5H13.8" stroke="#9a9a9a" stroke-width="0.8"/></svg>

<svg style="position:absolute;left:649.62px;top:824.64px;overflow:visible" width="13.96" height="13.53" viewBox="-1.0 -1.0 24.0 24.0" preserveAspectRatio="none"><rect x="0.8" y="0.8" width="20.4" height="20.4" fill="#f3f3f3" stroke="#111" stroke-width="1.6"/><path d="M7.5 1.6V20.4M14.5 1.6V20.4M1.6 7.8H20.4M1.6 14.3H20.4" stroke="#cfd3d0" stroke-width="0.9"/><path d="M1.2 3.5L6 8.5L7.8 7.2L20.8 20.2" fill="none" stroke="#1d7fe0" stroke-width="1.7" stroke-linejoin="round"/></svg>

<svg style="position:absolute;left:787.30px;top:826.54px;overflow:visible" width="14.50" height="10.61" viewBox="-0.8 -0.8 28.900000000000002 18.6" preserveAspectRatio="none"><path d="M3.7 0.8H26.5L23.4 16.2H0.8Z" fill="#1a1a1a" stroke="#111" stroke-width="1.4" stroke-linejoin="round"/><path d="M4.8 2.8H24.4L22 13.2H2.9Z" fill="#eef0a8"/><path d="M3.3 12.4H22.2L21.8 14.4H2.8Z" fill="#bfc6c8"/><path d="M13.4 2.8H15.6L13.2 13.8H11Z" fill="#fafafa"/><path d="M5.5 4L7 4.5M9.5 4L10.5 4.8M19 4.5L20.5 4M21.5 11L22.5 12" stroke="#777" stroke-width="0.8"/><circle cx="7.6" cy="7" r="0.9" fill="#1fa43c"/><circle cx="7.2" cy="9.2" r="0.9" fill="#1fa43c"/><circle cx="8" cy="8.1" r="0.7" fill="#1fa43c"/><circle cx="19.6" cy="8.2" r="1.1" fill="#1fa43c"/><path d="M10.8 5.2Q10 8 10.4 11.6M16.5 5.2Q17.5 8.2 17 11.5" stroke="#555" stroke-width="1" fill="none"/></svg>
<div style="position:absolute;left:881px;top:508px;width:568px;height:349px;background:#ecfbf4;box-sizing:border-box;border:1px solid #d9d9d9"></div>

<svg style="position:absolute;left:881px;top:508px" width="568" height="349"><path d="M285.5 190L285.50 49.50A140.5 140.5 0 1 1 284.67 330.50Z" fill="#0f914f"/><path d="M285.5 190L284.67 330.50A140.5 140.5 0 0 1 159.98 253.12Z" fill="#f2787c"/><path d="M285.5 190L159.98 253.12A140.5 140.5 0 0 1 230.84 60.57Z" fill="#98bcfc"/><path d="M285.5 190L230.84 60.57A140.5 140.5 0 0 1 285.50 49.50Z" fill="#e8e67a"/><path d="M19 63.60000000000002H140L259 59.5" fill="none" stroke="#8a8a8a" stroke-width="1.2"/><circle cx="259" cy="59.5" r="1.8" fill="#8a8a8a"/><path d="M19 144H160" fill="none" stroke="#8a8a8a" stroke-width="1.2"/><circle cx="160" cy="144" r="1.8" fill="#8a8a8a"/><path d="M19 303.20000000000005H215.5999999999999" fill="none" stroke="#8a8a8a" stroke-width="1.2"/><circle cx="215.5999999999999" cy="303.20000000000005" r="1.8" fill="#8a8a8a"/><path d="M417.20000000000005 190.20000000000005H551.5999999999999" fill="none" stroke="#8a8a8a" stroke-width="1.2"/><circle cx="417.20000000000005" cy="190.20000000000005" r="1.8" fill="#8a8a8a"/></svg>




<svg style="position:absolute;left:981.60px;top:558.54px;overflow:visible" width="14.50" height="10.61" viewBox="-0.8 -0.8 28.900000000000002 18.6" preserveAspectRatio="none"><path d="M3.7 0.8H26.5L23.4 16.2H0.8Z" fill="#1a1a1a" stroke="#111" stroke-width="1.4" stroke-linejoin="round"/><path d="M4.8 2.8H24.4L22 13.2H2.9Z" fill="#eef0a8"/><path d="M3.3 12.4H22.2L21.8 14.4H2.8Z" fill="#bfc6c8"/><path d="M13.4 2.8H15.6L13.2 13.8H11Z" fill="#fafafa"/><path d="M5.5 4L7 4.5M9.5 4L10.5 4.8M19 4.5L20.5 4M21.5 11L22.5 12" stroke="#777" stroke-width="0.8"/><circle cx="7.6" cy="7" r="0.9" fill="#1fa43c"/><circle cx="7.2" cy="9.2" r="0.9" fill="#1fa43c"/><circle cx="8" cy="8.1" r="0.7" fill="#1fa43c"/><circle cx="19.6" cy="8.2" r="1.1" fill="#1fa43c"/><path d="M10.8 5.2Q10 8 10.4 11.6M16.5 5.2Q17.5 8.2 17 11.5" stroke="#555" stroke-width="1" fill="none"/></svg>


<svg style="position:absolute;left:965.42px;top:636.44px;overflow:visible" width="13.96" height="13.53" viewBox="-1.0 -1.0 24.0 24.0" preserveAspectRatio="none"><rect x="0.8" y="0.8" width="20.4" height="20.4" fill="#f3f3f3" stroke="#111" stroke-width="1.6"/><path d="M7.5 1.6V20.4M14.5 1.6V20.4M1.6 7.8H20.4M1.6 14.3H20.4" stroke="#cfd3d0" stroke-width="0.9"/><path d="M1.2 3.5L6 8.5L7.8 7.2L20.8 20.2" fill="none" stroke="#1d7fe0" stroke-width="1.7" stroke-linejoin="round"/></svg>


<svg style="position:absolute;left:955.49px;top:796.51px;overflow:visible" width="13.73" height="14.28" viewBox="-0.8 -0.8 21.400000000000002 23.3" preserveAspectRatio="none"><path d="M4 1.8Q4 0.8 5.2 0.8H16.8Q19 0.8 19 2.8V3.2H16.4V19.2Q16.4 20.9 14.8 20.9H2.6Q0.8 20.9 0.8 19.2V17.6H3.6V3Q3.6 1.8 4 1.8Z" fill="#fafafa" stroke="#111" stroke-width="1.5" stroke-linejoin="round"/><path d="M5.6 3.8H13.8" stroke="#888" stroke-width="1.2"/><path d="M5.6 6.5H10.2M11.6 6.5H13.8M5.6 8.5H10.2M11.6 8.5H13.8M5.6 10.5H10.2M11.6 10.5H13.8M5.6 12.5H10.2M11.6 12.5H13.8M5.6 14.5H10.2M11.6 14.5H13.8M5.6 16.5H10.2M11.6 16.5H13.8" stroke="#9a9a9a" stroke-width="0.8"/></svg>


<svg style="position:absolute;left:1417.51px;top:683.50px;overflow:visible" width="14.78" height="13.49" viewBox="-0.8 -0.8 24.1 21.8" preserveAspectRatio="none"><path d="M0.9 4.4H17.8L15.8 13.8H3.2Z" fill="#e6e6e6" stroke="#111" stroke-width="1.7" stroke-linejoin="round"/><rect x="3.5" y="6.4" width="1.4" height="1.6" fill="#111"/><rect x="5.7" y="6.4" width="1.4" height="1.6" fill="#111"/><rect x="7.8999999999999995" y="6.4" width="1.4" height="1.6" fill="#111"/><rect x="10.100000000000001" y="6.4" width="1.4" height="1.6" fill="#111"/><rect x="12.3" y="6.4" width="1.4" height="1.6" fill="#111"/><rect x="14.5" y="6.4" width="1.4" height="1.6" fill="#111"/><rect x="4.7" y="9.8" width="1.4" height="1.6" fill="#111"/><rect x="6.8999999999999995" y="9.8" width="1.4" height="1.6" fill="#111"/><rect x="9.100000000000001" y="9.8" width="1.4" height="1.6" fill="#111"/><rect x="11.3" y="9.8" width="1.4" height="1.6" fill="#111"/><rect x="13.5" y="9.8" width="1.4" height="1.6" fill="#111"/><path d="M17.4 4.8L20.4 1.9" stroke="#111" stroke-width="2.6"/><path d="M17.6 4.6L20.2 2.1" stroke="#ddd" stroke-width="0.9"/><circle cx="20.9" cy="1.7" r="1.5" fill="#e8322b" stroke="#111" stroke-width="0.8"/><rect x="1.6" y="14.6" width="16.4" height="2.6" fill="#e6e6e6" stroke="#111" stroke-width="1.4"/><rect x="5.0" y="16.6" width="3" height="3" fill="#f2f2f2" stroke="#111" stroke-width="1.3"/><rect x="13.2" y="16.6" width="3" height="3" fill="#f2f2f2" stroke="#111" stroke-width="1.3"/></svg>

<div style="position:absolute;left:0px;top:868px;width:1464px;height:37px;background:#1c2023;"></div>
<svg style="position:absolute;left:14px;top:878px" width="16" height="16" viewBox="0 0 16 16"><path d="M0 2.2L6.6 1.3V7.6H0ZM7.4 1.2L16 0V7.6H7.4ZM0 8.4H6.6V14.7L0 13.8ZM7.4 8.4H16V16L7.4 14.8Z" fill="#fff"/></svg>
<svg style="position:absolute;left:62px;top:877px" width="22" height="18" viewBox="0 0 22 18"><path d="M0 1H8L10 3H22V18H0Z" fill="#e8b64c"/><rect x="0" y="4" width="22" height="14" fill="#f2d36b"/><path d="M5 17V9H17V17H14V12H8V17Z" fill="#2d8fd6"/></svg>
<svg style="position:absolute;left:110px;top:874px" width="24" height="24" viewBox="0 0 24 24"><circle cx="12" cy="12" r="12" fill="#34a853"/><path d="M12 12L1.6 6A12 12 0 0 1 22.4 6Z" fill="#d93025"/><path d="M12 12L22.4 6A12 12 0 0 1 12 24Z" fill="#f9ba39"/><circle cx="12" cy="12" r="5.2" fill="#fff"/><circle cx="12" cy="12" r="4" fill="#3b87d8"/></svg>
<svg style="position:absolute;left:160px;top:875px" width="22" height="22" viewBox="0 0 22 22"><circle cx="11" cy="11" r="11" fill="#3a96d8"/><path d="M4.5 10.5L16.5 6L14.5 16L10.5 13L9 15.5L8.8 12L14 7.5L7.5 11.5Z" fill="#fff"/></svg>
<svg style="position:absolute;left:208px;top:874px" width="24" height="24" viewBox="0 0 24 24"><circle cx="12" cy="12" r="11.5" fill="#1ed760"/><path d="M5.5 8.5Q12 6.5 18.5 9.5M6.5 12Q12 10.5 17 13M7.5 15.3Q12 14 15.8 16" fill="none" stroke="#111" stroke-width="2" stroke-linecap="round"/></svg>
<svg style="position:absolute;left:259px;top:874px" width="20" height="22" viewBox="0 0 20 22"><rect x="1" y="1" width="17" height="20" fill="#e9f1f8" stroke="#5a8fc0" stroke-width="1"/><rect x="1" y="1" width="17" height="3" fill="#4c9be0"/><text x="7" y="15" font-size="12" font-weight="700" fill="#f0a020" text-anchor="middle" font-family="Liberation Serif">A</text><path d="M12 9H16M12 12H16M4 17H16" stroke="#7aa9d6" stroke-width="1"/></svg>
<svg style="position:absolute;left:306px;top:875px" width="22" height="21" viewBox="0 0 22 21"><path d="M4 3L17 1L21 18L7 21Z" fill="#dfeaf2" stroke="#9bb6c9" stroke-width="1"/><path d="M6 6L16 4.5L18 15L8 17Z" fill="#7bb7e6"/><rect x="1" y="14" width="5" height="5" fill="#3a7bc8"/></svg>
<svg style="position:absolute;left:355px;top:874px" width="24" height="24" viewBox="0 0 24 24"><rect x="0" y="0" width="24" height="24" fill="#b31010"/><path d="M4.5 20L6.5 4H13.5L13.2 6.8H8.8L8.3 10.5H12.5L12.2 13.2H8L7.2 20Z" fill="#fff"/><path d="M12.5 13.5H19.5L19.2 15.5L14.8 18.3H19.3L19 20.3H11.8L12.1 18.2L16.5 15.5H12.3Z" fill="#fff"/></svg>
<svg style="position:absolute;left:405px;top:875px" width="21" height="21" viewBox="0 0 21 21"><rect x="0.5" y="0.3" width="20.6" height="20.8" rx="4.5" fill="#fff"/><path d="M17.6 5.6L6 6.1Q4.4 6.2 4.4 7.6V8.8L17.6 15.6M17.6 15.9L6 15.3Q4.4 15.2 4.4 13.8V12.6L17.6 5.8" fill="none" stroke="#111" stroke-width="1.7" stroke-linejoin="round"/></svg>
<svg style="position:absolute;left:0;top:0" width="1464" height="905"><text x="62.00" y="33.00" font-size="19.13" font-family="Liberation Sans" fill="#1f1f1f" textLength="252.04" lengthAdjust="spacingAndGlyphs">Planer budżetu | Planery.com.pl</text><text x="62.00" y="55.00" font-size="14.78" font-family="Liberation Sans" fill="#1f1f1f" textLength="22.95" lengthAdjust="spacingAndGlyphs">Plik</text><text x="101.00" y="55.00" font-size="14.78" font-family="Liberation Sans" fill="#1f1f1f" textLength="40.99" lengthAdjust="spacingAndGlyphs">Edytuj</text><text x="157.00" y="55.00" font-size="14.78" font-family="Liberation Sans" fill="#1f1f1f" textLength="39.90" lengthAdjust="spacingAndGlyphs">Widok</text><text x="213.00" y="55.00" font-size="14.78" font-family="Liberation Sans" fill="#1f1f1f" textLength="42.93" lengthAdjust="spacingAndGlyphs">Wstaw</text><text x="272.00" y="55.00" font-size="14.78" font-family="Liberation Sans" fill="#1f1f1f" textLength="58.01" lengthAdjust="spacingAndGlyphs">Formatuj</text><text x="346.00" y="55.00" font-size="14.78" font-family="Liberation Sans" fill="#1f1f1f" textLength="34.01" lengthAdjust="spacingAndGlyphs">Dane</text><text x="396.00" y="55.00" font-size="14.78" font-family="Liberation Sans" fill="#1f1f1f" textLength="64.96" lengthAdjust="spacingAndGlyphs">Narzędzia</text><text x="478.00" y="55.00" font-size="14.78" font-family="Liberation Sans" fill="#1f1f1f" textLength="84.98" lengthAdjust="spacingAndGlyphs">Rozszerzenia</text><text x="580.00" y="55.00" font-size="14.78" font-family="Liberation Sans" fill="#1f1f1f" textLength="44.03" lengthAdjust="spacingAndGlyphs">Pomoc</text><text x="61.00" y="93.00" font-size="14.20" font-family="Liberation Sans" fill="#444746" textLength="35.02" lengthAdjust="spacingAndGlyphs">Menu</text><text x="263.00" y="95.00" font-size="14.20" font-family="Liberation Sans" fill="#444746" textLength="35.97" lengthAdjust="spacingAndGlyphs">100%</text><text x="348.30" y="93.10" font-size="13.33" font-family="Liberation Sans" fill="#444746" textLength="10.33" lengthAdjust="spacingAndGlyphs">zł</text><text x="381.20" y="93.10" font-size="13.33" font-family="Liberation Sans" fill="#444746" textLength="10.09" lengthAdjust="spacingAndGlyphs">%</text><text x="410.00" y="90.80" font-size="11.16" font-family="Liberation Sans" fill="#444746" textLength="8.89" lengthAdjust="spacingAndGlyphs">.0</text><text x="441.60" y="90.80" font-size="11.16" font-family="Liberation Sans" fill="#444746" textLength="16.40" lengthAdjust="spacingAndGlyphs">.00</text><text x="474.50" y="93.10" font-size="12.17" font-family="Liberation Sans" fill="#444746" textLength="17.38" lengthAdjust="spacingAndGlyphs">123</text><text x="519.30" y="94.30" font-size="14.49" font-family="Liberation Sans" fill="#444746" textLength="28.82" lengthAdjust="spacingAndGlyphs">Lato</text><text x="650.70" y="93.60" font-size="13.62" font-family="Liberation Sans" fill="#444746" textLength="14.33" lengthAdjust="spacingAndGlyphs">12</text><text x="721.80" y="94.30" font-size="14.64" font-family="Liberation Sans" font-weight="700" fill="#041e49" textLength="8.53" lengthAdjust="spacingAndGlyphs">B</text><text x="818.20" y="92.20" font-size="12.90" font-family="Liberation Sans" fill="#444746" textLength="9.66" lengthAdjust="spacingAndGlyphs">A</text><text x="51.33" y="132.00" font-size="11.00" font-family="Liberation Sans" fill="#444746" textLength="7.34" lengthAdjust="spacingAndGlyphs">A</text><text x="117.33" y="132.00" font-size="11.00" font-family="Liberation Sans" fill="#444746" textLength="7.34" lengthAdjust="spacingAndGlyphs">B</text><text x="230.03" y="132.00" font-size="11.00" font-family="Liberation Sans" fill="#444746" textLength="7.94" lengthAdjust="spacingAndGlyphs">C</text><text x="336.53" y="132.00" font-size="11.00" font-family="Liberation Sans" fill="#444746" textLength="7.94" lengthAdjust="spacingAndGlyphs">D</text><text x="436.83" y="132.00" font-size="11.00" font-family="Liberation Sans" fill="#444746" textLength="7.34" lengthAdjust="spacingAndGlyphs">E</text><text x="504.14" y="132.00" font-size="11.00" font-family="Liberation Sans" fill="#444746" textLength="6.72" lengthAdjust="spacingAndGlyphs">F</text><text x="573.72" y="132.00" font-size="11.00" font-family="Liberation Sans" fill="#444746" textLength="8.56" lengthAdjust="spacingAndGlyphs">G</text><text x="681.03" y="132.00" font-size="11.00" font-family="Liberation Sans" fill="#444746" textLength="7.94" lengthAdjust="spacingAndGlyphs">H</text><text x="784.97" y="132.00" font-size="11.00" font-family="Liberation Sans" fill="#444746" textLength="3.06" lengthAdjust="spacingAndGlyphs">I</text><text x="879.75" y="132.00" font-size="11.00" font-family="Liberation Sans" fill="#444746" textLength="5.50" lengthAdjust="spacingAndGlyphs">J</text><text x="949.33" y="132.00" font-size="11.00" font-family="Liberation Sans" fill="#444746" textLength="7.34" lengthAdjust="spacingAndGlyphs">K</text><text x="995.44" y="132.00" font-size="11.00" font-family="Liberation Sans" fill="#444746" textLength="6.12" lengthAdjust="spacingAndGlyphs">L</text><text x="1070.92" y="132.00" font-size="11.00" font-family="Liberation Sans" fill="#444746" textLength="9.16" lengthAdjust="spacingAndGlyphs">M</text><text x="1179.53" y="132.00" font-size="11.00" font-family="Liberation Sans" fill="#444746" textLength="7.94" lengthAdjust="spacingAndGlyphs">N</text><text x="1281.22" y="132.00" font-size="11.00" font-family="Liberation Sans" fill="#444746" textLength="8.56" lengthAdjust="spacingAndGlyphs">O</text><text x="1377.83" y="132.00" font-size="11.00" font-family="Liberation Sans" fill="#444746" textLength="7.34" lengthAdjust="spacingAndGlyphs">P</text><text x="1442.22" y="132.00" font-size="11.00" font-family="Liberation Sans" fill="#444746" textLength="8.56" lengthAdjust="spacingAndGlyphs">Q</text><text x="19.64" y="152.50" font-size="11.00" font-family="Liberation Sans" font-weight="700" fill="#0a3069" textLength="6.12" lengthAdjust="spacingAndGlyphs">1</text><text x="19.64" y="171.50" font-size="11.00" font-family="Liberation Sans" fill="#444746" textLength="6.12" lengthAdjust="spacingAndGlyphs">2</text><text x="19.64" y="189.50" font-size="11.00" font-family="Liberation Sans" fill="#444746" textLength="6.12" lengthAdjust="spacingAndGlyphs">3</text><text x="19.64" y="206.50" font-size="11.00" font-family="Liberation Sans" fill="#444746" textLength="6.12" lengthAdjust="spacingAndGlyphs">4</text><text x="19.64" y="223.50" font-size="11.00" font-family="Liberation Sans" fill="#444746" textLength="6.12" lengthAdjust="spacingAndGlyphs">5</text><text x="19.64" y="240.50" font-size="11.00" font-family="Liberation Sans" fill="#444746" textLength="6.12" lengthAdjust="spacingAndGlyphs">6</text><text x="19.64" y="257.00" font-size="11.00" font-family="Liberation Sans" fill="#444746" textLength="6.12" lengthAdjust="spacingAndGlyphs">7</text><text x="19.64" y="273.00" font-size="11.00" font-family="Liberation Sans" fill="#444746" textLength="6.12" lengthAdjust="spacingAndGlyphs">8</text><text x="19.64" y="290.00" font-size="11.00" font-family="Liberation Sans" fill="#444746" textLength="6.12" lengthAdjust="spacingAndGlyphs">9</text><text x="16.58" y="308.00" font-size="11.00" font-family="Liberation Sans" fill="#444746" textLength="12.24" lengthAdjust="spacingAndGlyphs">10</text><text x="16.99" y="328.50" font-size="11.00" font-family="Liberation Sans" fill="#444746" textLength="11.42" lengthAdjust="spacingAndGlyphs">11</text><text x="16.58" y="354.00" font-size="11.00" font-family="Liberation Sans" fill="#444746" textLength="12.24" lengthAdjust="spacingAndGlyphs">12</text><text x="16.58" y="382.00" font-size="11.00" font-family="Liberation Sans" fill="#444746" textLength="12.24" lengthAdjust="spacingAndGlyphs">13</text><text x="16.58" y="410.00" font-size="11.00" font-family="Liberation Sans" fill="#444746" textLength="12.24" lengthAdjust="spacingAndGlyphs">14</text><text x="16.58" y="438.00" font-size="11.00" font-family="Liberation Sans" fill="#444746" textLength="12.24" lengthAdjust="spacingAndGlyphs">15</text><text x="16.58" y="466.00" font-size="11.00" font-family="Liberation Sans" fill="#444746" textLength="12.24" lengthAdjust="spacingAndGlyphs">16</text><text x="16.58" y="492.00" font-size="11.00" font-family="Liberation Sans" fill="#444746" textLength="12.24" lengthAdjust="spacingAndGlyphs">17</text><text x="16.58" y="516.00" font-size="11.00" font-family="Liberation Sans" fill="#444746" textLength="12.24" lengthAdjust="spacingAndGlyphs">18</text><text x="16.58" y="540.00" font-size="11.00" font-family="Liberation Sans" fill="#444746" textLength="12.24" lengthAdjust="spacingAndGlyphs">19</text><text x="16.58" y="564.00" font-size="11.00" font-family="Liberation Sans" fill="#444746" textLength="12.24" lengthAdjust="spacingAndGlyphs">20</text><text x="16.58" y="587.50" font-size="11.00" font-family="Liberation Sans" fill="#444746" textLength="12.24" lengthAdjust="spacingAndGlyphs">21</text><text x="16.58" y="609.50" font-size="11.00" font-family="Liberation Sans" fill="#444746" textLength="12.24" lengthAdjust="spacingAndGlyphs">79</text><text x="16.58" y="630.50" font-size="11.00" font-family="Liberation Sans" fill="#444746" textLength="12.24" lengthAdjust="spacingAndGlyphs">80</text><text x="16.58" y="651.50" font-size="11.00" font-family="Liberation Sans" fill="#444746" textLength="12.24" lengthAdjust="spacingAndGlyphs">81</text><text x="16.58" y="672.50" font-size="11.00" font-family="Liberation Sans" fill="#444746" textLength="12.24" lengthAdjust="spacingAndGlyphs">82</text><text x="16.58" y="693.50" font-size="11.00" font-family="Liberation Sans" fill="#444746" textLength="12.24" lengthAdjust="spacingAndGlyphs">83</text><text x="16.58" y="714.50" font-size="11.00" font-family="Liberation Sans" fill="#444746" textLength="12.24" lengthAdjust="spacingAndGlyphs">84</text><text x="16.58" y="735.50" font-size="11.00" font-family="Liberation Sans" fill="#444746" textLength="12.24" lengthAdjust="spacingAndGlyphs">85</text><text x="16.58" y="756.50" font-size="11.00" font-family="Liberation Sans" fill="#444746" textLength="12.24" lengthAdjust="spacingAndGlyphs">86</text><text x="16.58" y="777.50" font-size="11.00" font-family="Liberation Sans" fill="#444746" textLength="12.24" lengthAdjust="spacingAndGlyphs">87</text><text x="16.58" y="798.50" font-size="11.00" font-family="Liberation Sans" fill="#444746" textLength="12.24" lengthAdjust="spacingAndGlyphs">88</text><text x="16.58" y="819.50" font-size="11.00" font-family="Liberation Sans" fill="#444746" textLength="12.24" lengthAdjust="spacingAndGlyphs">89</text><text x="16.58" y="840.50" font-size="11.00" font-family="Liberation Sans" fill="#444746" textLength="12.24" lengthAdjust="spacingAndGlyphs">90</text><text x="16.58" y="861.50" font-size="11.00" font-family="Liberation Sans" fill="#444746" textLength="12.24" lengthAdjust="spacingAndGlyphs">91</text><text x="180.00" y="166.00" font-size="21.30" font-family="Liberation Sans" font-weight="700" fill="#ffffff" textLength="164.34" lengthAdjust="spacingAndGlyphs">Budżet miesięczny</text><text x="146.60" y="201.50" font-size="20.29" font-family="Liberation Sans" font-weight="700" fill="#000" textLength="62.67" lengthAdjust="spacingAndGlyphs">Miesiąc</text><text x="353.50" y="201.50" font-size="20.29" font-family="Liberation Sans" font-weight="700" fill="#000" textLength="74.40" lengthAdjust="spacingAndGlyphs">Kwiecień</text><text x="162.10" y="235.90" font-size="20.29" font-family="Liberation Sans" font-weight="700" fill="#000" textLength="31.50" lengthAdjust="spacingAndGlyphs">Rok</text><text x="369.10" y="235.90" font-size="20.29" font-family="Liberation Sans" font-weight="700" fill="#000" textLength="42.39" lengthAdjust="spacingAndGlyphs">2025</text><text x="647.00" y="167.00" font-size="22.32" font-family="Liberation Sans" font-weight="700" fill="#ffffff" textLength="98.64" lengthAdjust="spacingAndGlyphs">Przychody</text><text x="925.00" y="167.00" font-size="22.32" font-family="Liberation Sans" font-weight="700" fill="#ffffff" textLength="146.62" lengthAdjust="spacingAndGlyphs">Łączne wydatki</text><text x="1218.30" y="167.00" font-size="22.32" font-family="Liberation Sans" font-weight="700" fill="#ffffff" textLength="155.10" lengthAdjust="spacingAndGlyphs">Dostępne środki</text><text x="635.50" y="219.50" font-size="21.74" font-family="Liberation Sans" font-weight="700" font-style="italic" fill="#000" textLength="103.04" lengthAdjust="spacingAndGlyphs">5 100,00 zł</text><text x="934.81" y="219.50" font-size="21.74" font-family="Liberation Sans" font-weight="700" font-style="italic" fill="#000" textLength="101.44" lengthAdjust="spacingAndGlyphs">4 716,81 zł</text><text x="1241.00" y="219.50" font-size="21.74" font-family="Liberation Sans" font-weight="700" font-style="italic" fill="#000" textLength="85.76" lengthAdjust="spacingAndGlyphs">383,19 zł</text><text x="170.90" y="303.00" font-size="21.45" font-family="Liberation Sans" font-weight="700" fill="#ffffff" textLength="184.54" lengthAdjust="spacingAndGlyphs">Przepływy Pieniężne</text><text x="305.20" y="331.30" font-size="14.93" font-family="Liberation Sans" font-weight="700" fill="#000" textLength="71.08" lengthAdjust="spacingAndGlyphs">Planowane</text><text x="419.00" y="331.30" font-size="14.93" font-family="Liberation Sans" font-weight="700" fill="#000" textLength="43.09" lengthAdjust="spacingAndGlyphs">Realne</text><text x="128.30" y="357.00" font-size="16.38" font-family="Liberation Sans" fill="#000" textLength="76.02" lengthAdjust="spacingAndGlyphs">Przychody:</text><text x="301.00" y="357.00" font-size="16.38" font-family="Liberation Sans" fill="#000" textLength="78.96" lengthAdjust="spacingAndGlyphs">5 100,00 zł</text><text x="401.00" y="357.00" font-size="16.38" font-family="Liberation Sans" fill="#000" textLength="78.96" lengthAdjust="spacingAndGlyphs">5 100,00 zł</text><text x="105.40" y="385.00" font-size="16.38" font-family="Liberation Sans" fill="#000" textLength="118.80" lengthAdjust="spacingAndGlyphs">Wydatki bieżące:</text><text x="301.00" y="385.00" font-size="16.38" font-family="Liberation Sans" fill="#000" textLength="78.96" lengthAdjust="spacingAndGlyphs">2 770,00 zł</text><text x="401.00" y="385.00" font-size="16.38" font-family="Liberation Sans" fill="#000" textLength="78.96" lengthAdjust="spacingAndGlyphs">2 362,84 zł</text><text x="132.20" y="413.00" font-size="16.38" font-family="Liberation Sans" fill="#000" textLength="67.63" lengthAdjust="spacingAndGlyphs">Rachunki:</text><text x="307.75" y="413.00" font-size="16.38" font-family="Liberation Sans" fill="#000" textLength="65.48" lengthAdjust="spacingAndGlyphs">825,00 zł</text><text x="407.75" y="413.00" font-size="16.38" font-family="Liberation Sans" fill="#000" textLength="65.48" lengthAdjust="spacingAndGlyphs">825,00 zł</text><text x="124.60" y="441.00" font-size="16.38" font-family="Liberation Sans" fill="#000" textLength="81.20" lengthAdjust="spacingAndGlyphs">Zadłużenie:</text><text x="301.50" y="441.00" font-size="16.38" font-family="Liberation Sans" fill="#000" textLength="77.96" lengthAdjust="spacingAndGlyphs">1 228,98 zł</text><text x="401.50" y="441.00" font-size="16.38" font-family="Liberation Sans" fill="#000" textLength="77.96" lengthAdjust="spacingAndGlyphs">1 228,98 zł</text><text x="115.60" y="469.00" font-size="16.38" font-family="Liberation Sans" fill="#000" textLength="97.66" lengthAdjust="spacingAndGlyphs">Oszczędności:</text><text x="307.75" y="469.00" font-size="16.38" font-family="Liberation Sans" fill="#000" textLength="65.48" lengthAdjust="spacingAndGlyphs">299,00 zł</text><text x="407.75" y="469.00" font-size="16.38" font-family="Liberation Sans" fill="#000" textLength="65.48" lengthAdjust="spacingAndGlyphs">299,99 zł</text><text x="90.00" y="494.80" font-size="16.38" font-family="Liberation Sans" fill="#ffffff" textLength="175.32" lengthAdjust="spacingAndGlyphs">Wolne / Dostępne środki</text><text x="309.50" y="494.80" font-size="16.38" font-family="Liberation Sans" font-weight="700" fill="#ffffff" textLength="63.12" lengthAdjust="spacingAndGlyphs">-22,98 zł</text><text x="407.80" y="494.80" font-size="16.38" font-family="Liberation Sans" font-weight="700" fill="#ffffff" textLength="66.09" lengthAdjust="spacingAndGlyphs">383,19 zł</text><text x="591.60" y="357.00" font-size="16.38" font-family="Liberation Sans" fill="#11734b" textLength="59.77" lengthAdjust="spacingAndGlyphs">Jedzenie</text><text x="602.80" y="385.00" font-size="16.38" font-family="Liberation Sans" fill="#0a53a8" textLength="36.39" lengthAdjust="spacingAndGlyphs">Życie</text><text x="588.80" y="413.00" font-size="16.38" font-family="Liberation Sans" fill="#473822" textLength="65.44" lengthAdjust="spacingAndGlyphs">Transport</text><text x="590.90" y="441.00" font-size="16.38" font-family="Liberation Sans" fill="#22307f" textLength="61.62" lengthAdjust="spacingAndGlyphs">Osobiste</text><text x="588.00" y="469.00" font-size="16.38" font-family="Liberation Sans" fill="#6f3a10" textLength="67.32" lengthAdjust="spacingAndGlyphs">Rozrywka</text><text x="638.40" y="303.20" font-size="21.45" font-family="Liberation Sans" font-weight="700" fill="#ffffff" textLength="146.14" lengthAdjust="spacingAndGlyphs">Wydatki bieżące</text><text x="751.30" y="331.30" font-size="14.93" font-family="Liberation Sans" font-weight="700" fill="#000" textLength="70.78" lengthAdjust="spacingAndGlyphs">Planowane</text><text x="861.00" y="331.30" font-size="14.93" font-family="Liberation Sans" font-weight="700" fill="#000" textLength="43.39" lengthAdjust="spacingAndGlyphs">Realne</text><text x="747.20" y="357.00" font-size="16.38" font-family="Liberation Sans" fill="#000" textLength="78.56" lengthAdjust="spacingAndGlyphs">1 400,00 zł</text><text x="849.70" y="357.00" font-size="16.38" font-family="Liberation Sans" fill="#000" textLength="65.58" lengthAdjust="spacingAndGlyphs">818,95 zł</text><text x="753.90" y="385.00" font-size="16.38" font-family="Liberation Sans" fill="#000" textLength="65.18" lengthAdjust="spacingAndGlyphs">350,00 zł</text><text x="849.70" y="385.00" font-size="16.38" font-family="Liberation Sans" fill="#000" textLength="65.58" lengthAdjust="spacingAndGlyphs">100,00 zł</text><text x="753.90" y="413.00" font-size="16.38" font-family="Liberation Sans" fill="#000" textLength="65.18" lengthAdjust="spacingAndGlyphs">500,00 zł</text><text x="849.50" y="413.00" font-size="16.38" font-family="Liberation Sans" fill="#000" textLength="65.98" lengthAdjust="spacingAndGlyphs">399,99 zł</text><text x="753.90" y="441.00" font-size="16.38" font-family="Liberation Sans" fill="#000" textLength="65.18" lengthAdjust="spacingAndGlyphs">400,00 zł</text><text x="849.50" y="441.00" font-size="16.38" font-family="Liberation Sans" fill="#000" textLength="65.98" lengthAdjust="spacingAndGlyphs">379,94 zł</text><text x="753.90" y="469.00" font-size="16.38" font-family="Liberation Sans" fill="#000" textLength="65.18" lengthAdjust="spacingAndGlyphs">120,00 zł</text><text x="849.50" y="469.00" font-size="16.38" font-family="Liberation Sans" fill="#000" textLength="65.98" lengthAdjust="spacingAndGlyphs">663,96 zł</text><text x="1148.20" y="302.70" font-size="21.45" font-family="Liberation Sans" font-weight="700" fill="#ffffff" textLength="80.22" lengthAdjust="spacingAndGlyphs">Rachunki</text><text x="1249.90" y="331.30" font-size="14.93" font-family="Liberation Sans" font-weight="700" fill="#000" textLength="71.58" lengthAdjust="spacingAndGlyphs">Planowane</text><text x="1360.00" y="331.30" font-size="14.93" font-family="Liberation Sans" font-weight="700" fill="#000" textLength="43.39" lengthAdjust="spacingAndGlyphs">Realne</text><text x="1104.80" y="357.00" font-size="16.38" font-family="Liberation Sans" fill="#000" textLength="49.18" lengthAdjust="spacingAndGlyphs">Czynsz</text><rect x="1103.80" y="351.60" width="51.20" height="1.1" fill="#000"/><text x="1252.90" y="357.00" font-size="16.38" font-family="Liberation Sans" fill="#000" textLength="65.18" lengthAdjust="spacingAndGlyphs">500,00 zł</text><text x="1348.90" y="357.00" font-size="16.38" font-family="Liberation Sans" fill="#000" textLength="65.18" lengthAdjust="spacingAndGlyphs">500,00 zł</text><text x="1113.30" y="385.00" font-size="16.38" font-family="Liberation Sans" fill="#000" textLength="32.34" lengthAdjust="spacingAndGlyphs">Prąd</text><rect x="1112.30" y="379.60" width="34.30" height="1.1" fill="#000"/><text x="1252.60" y="385.00" font-size="16.38" font-family="Liberation Sans" fill="#000" textLength="65.78" lengthAdjust="spacingAndGlyphs">140,00 zł</text><text x="1348.60" y="385.00" font-size="16.38" font-family="Liberation Sans" fill="#000" textLength="65.78" lengthAdjust="spacingAndGlyphs">140,00 zł</text><text x="1116.00" y="413.00" font-size="16.38" font-family="Liberation Sans" fill="#000" textLength="27.09" lengthAdjust="spacingAndGlyphs">Gaz</text><rect x="1115.00" y="407.60" width="29.10" height="1.1" fill="#000"/><text x="1256.70" y="413.00" font-size="16.38" font-family="Liberation Sans" fill="#000" textLength="57.56" lengthAdjust="spacingAndGlyphs">40,00 zł</text><text x="1352.70" y="413.00" font-size="16.38" font-family="Liberation Sans" fill="#000" textLength="57.56" lengthAdjust="spacingAndGlyphs">40,00 zł</text><text x="1101.70" y="441.00" font-size="16.38" font-family="Liberation Sans" fill="#000" textLength="56.22" lengthAdjust="spacingAndGlyphs">Internet</text><rect x="1100.70" y="435.60" width="58.20" height="1.1" fill="#000"/><text x="1256.70" y="441.00" font-size="16.38" font-family="Liberation Sans" fill="#000" textLength="57.56" lengthAdjust="spacingAndGlyphs">40,00 zł</text><text x="1352.70" y="441.00" font-size="16.38" font-family="Liberation Sans" fill="#000" textLength="57.56" lengthAdjust="spacingAndGlyphs">40,00 zł</text><text x="1098.20" y="469.00" font-size="16.38" font-family="Liberation Sans" fill="#000" textLength="62.46" lengthAdjust="spacingAndGlyphs">Telewizja</text><rect x="1097.20" y="463.60" width="64.50" height="1.1" fill="#000"/><text x="1256.70" y="469.00" font-size="16.38" font-family="Liberation Sans" fill="#000" textLength="57.56" lengthAdjust="spacingAndGlyphs">20,00 zł</text><text x="1352.70" y="469.00" font-size="16.38" font-family="Liberation Sans" fill="#000" textLength="57.56" lengthAdjust="spacingAndGlyphs">20,00 zł</text><text x="82.50" y="542.00" font-size="20.29" font-family="Liberation Sans" font-weight="700" fill="#000" textLength="184.51" lengthAdjust="spacingAndGlyphs">Przepływy pieniężne</text><text x="407.00" y="568.10" font-size="13.33" font-family="Liberation Sans" fill="#222" textLength="57.98" lengthAdjust="spacingAndGlyphs">Planowane</text><text x="502.00" y="568.10" font-size="13.33" font-family="Liberation Sans" fill="#222" textLength="35.99" lengthAdjust="spacingAndGlyphs">Realne</text><text x="82.50" y="590.70" font-size="12.03" font-family="Liberation Sans" fill="#222" textLength="58.67" lengthAdjust="spacingAndGlyphs">6 000,00 zł</text><text x="82.50" y="668.40" font-size="12.03" font-family="Liberation Sans" fill="#222" textLength="58.67" lengthAdjust="spacingAndGlyphs">4 000,00 zł</text><text x="82.50" y="746.00" font-size="12.03" font-family="Liberation Sans" fill="#222" textLength="58.67" lengthAdjust="spacingAndGlyphs">2 000,00 zł</text><text x="105.85" y="824.00" font-size="12.03" font-family="Liberation Sans" fill="#222" textLength="35.36" lengthAdjust="spacingAndGlyphs">0,00 zł</text><text x="196.90" y="836.00" font-size="13.04" font-family="Liberation Sans" fill="#222" textLength="57.72" lengthAdjust="spacingAndGlyphs">Przychody:</text><text x="309.70" y="836.00" font-size="13.04" font-family="Liberation Sans" fill="#222" textLength="89.70" lengthAdjust="spacingAndGlyphs">Wydatki bieżące:</text><text x="458.80" y="836.00" font-size="13.04" font-family="Liberation Sans" fill="#222" textLength="53.22" lengthAdjust="spacingAndGlyphs">Rachunki:</text><text x="583.50" y="836.00" font-size="13.04" font-family="Liberation Sans" fill="#222" textLength="61.40" lengthAdjust="spacingAndGlyphs">Zadłużenie:</text><text x="705.40" y="836.00" font-size="13.04" font-family="Liberation Sans" fill="#222" textLength="77.17" lengthAdjust="spacingAndGlyphs">Oszczędności:</text><text x="899.80" y="542.00" font-size="20.29" font-family="Liberation Sans" font-weight="700" fill="#000" textLength="161.45" lengthAdjust="spacingAndGlyphs">Podział wydatków</text><text x="1051.00" y="671.70" font-size="13.33" font-family="Liberation Sans" fill="#111" textLength="67.27" lengthAdjust="spacingAndGlyphs">1 228,98 zł</text><text x="1086.70" y="785.60" font-size="13.33" font-family="Liberation Sans" fill="#111" textLength="56.38" lengthAdjust="spacingAndGlyphs">825,00 zł</text><text x="1223.00" y="702.40" font-size="13.33" font-family="Liberation Sans" fill="#111" textLength="67.47" lengthAdjust="spacingAndGlyphs">2 362,84 zł</text><text x="900.10" y="567.90" font-size="12.61" font-family="Liberation Sans" fill="#222" textLength="76.57" lengthAdjust="spacingAndGlyphs">Oszczędności:</text><text x="900.50" y="582.80" font-size="10.58" font-family="Liberation Sans" fill="#9e9e9e" textLength="23.49" lengthAdjust="spacingAndGlyphs">6,4%</text><text x="900.10" y="647.70" font-size="12.61" font-family="Liberation Sans" fill="#222" textLength="59.90" lengthAdjust="spacingAndGlyphs">Zadłużenie:</text><text x="900.50" y="662.50" font-size="10.58" font-family="Liberation Sans" fill="#9e9e9e" textLength="30.00" lengthAdjust="spacingAndGlyphs">26,1%</text><text x="900.10" y="807.80" font-size="12.61" font-family="Liberation Sans" fill="#222" textLength="50.92" lengthAdjust="spacingAndGlyphs">Rachunki:</text><text x="900.50" y="822.70" font-size="10.58" font-family="Liberation Sans" fill="#9e9e9e" textLength="30.00" lengthAdjust="spacingAndGlyphs">17,5%</text><text x="1324.30" y="694.80" font-size="12.61" font-family="Liberation Sans" fill="#222" textLength="89.20" lengthAdjust="spacingAndGlyphs">Wydatki bieżące:</text><text x="1402.00" y="709.60" font-size="10.58" font-family="Liberation Sans" fill="#9e9e9e" textLength="30.00" lengthAdjust="spacingAndGlyphs">50,1%</text></svg>
</body></html>
